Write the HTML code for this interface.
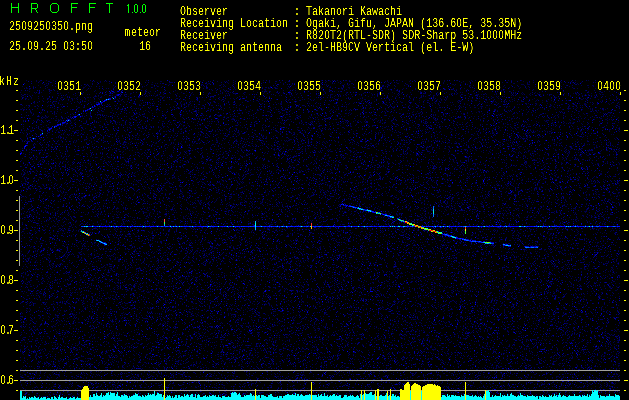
<!DOCTYPE html>
<html><head><meta charset="utf-8">
<style>
html,body{margin:0;padding:0;}
body{width:629px;height:400px;overflow:hidden;background:#000;position:relative;font-family:"Liberation Mono",monospace;}
.t{filter:url(#th);position:absolute;white-space:pre;font-size:13.5px;line-height:12px;color:#ff0;transform-origin:0 0;transform:scaleX(0.741);}
.h{position:absolute;top:1px;font-family:"Liberation Sans",sans-serif;font-size:14px;line-height:14px;color:#0f0;transform-origin:0 0;transform:scaleX(0.95);}
.v{position:absolute;top:4px;font-family:"Liberation Sans",sans-serif;font-size:11.5px;line-height:11px;color:#0f0;transform-origin:0 0;transform:scaleX(0.78);}
.z{line-height:0;font-family:"Liberation Sans",sans-serif;font-size:12.6px;padding-left:0.55px;letter-spacing:0.55px;}
#spec{position:absolute;left:20px;top:80px;width:600px;height:320px;background:#000010;}
canvas{position:absolute;left:0;top:0;}
svg{position:absolute;left:0;top:0;}
</style></head><body>
<svg width="0" height="0" style="position:absolute"><filter id="th" x="0" y="0" width="100%" height="100%"><feComponentTransfer><feFuncA type="linear" slope="2.5" intercept="-0.8"/></feComponentTransfer></filter></svg>
<div id="spec"><canvas id="cv" width="600" height="320"></canvas></div>

<svg width="629" height="400" viewBox="0 0 629 400" shape-rendering="crispEdges"><rect x="56" y="80" width="24" height="11" fill="#000"/><rect x="116" y="80" width="24" height="11" fill="#000"/><rect x="176" y="80" width="24" height="11" fill="#000"/><rect x="236" y="80" width="24" height="11" fill="#000"/><rect x="296" y="80" width="24" height="11" fill="#000"/><rect x="356" y="80" width="24" height="11" fill="#000"/><rect x="416" y="80" width="24" height="11" fill="#000"/><rect x="476" y="80" width="24" height="11" fill="#000"/><rect x="536" y="80" width="24" height="11" fill="#000"/><rect x="596" y="80" width="24" height="11" fill="#000"/><rect x="80" y="92" width="1" height="3" fill="#ff0"/><rect x="140" y="92" width="1" height="3" fill="#ff0"/><rect x="200" y="92" width="1" height="3" fill="#ff0"/><rect x="260" y="92" width="1" height="3" fill="#ff0"/><rect x="320" y="92" width="1" height="3" fill="#ff0"/><rect x="380" y="92" width="1" height="3" fill="#ff0"/><rect x="440" y="92" width="1" height="3" fill="#ff0"/><rect x="500" y="92" width="1" height="3" fill="#ff0"/><rect x="560" y="92" width="1" height="3" fill="#ff0"/><rect x="620" y="92" width="1" height="3" fill="#ff0"/><rect x="16" y="90" width="2" height="1" fill="#ff0"/><rect x="624" y="90" width="2" height="1" fill="#ff0"/><rect x="16" y="100" width="2" height="1" fill="#ff0"/><rect x="624" y="100" width="2" height="1" fill="#ff0"/><rect x="16" y="110" width="2" height="1" fill="#ff0"/><rect x="624" y="110" width="2" height="1" fill="#ff0"/><rect x="16" y="120" width="2" height="1" fill="#ff0"/><rect x="624" y="120" width="2" height="1" fill="#ff0"/><rect x="14" y="130" width="4" height="1" fill="#ff0"/><rect x="624" y="130" width="4" height="1" fill="#ff0"/><rect x="16" y="140" width="2" height="1" fill="#ff0"/><rect x="624" y="140" width="2" height="1" fill="#ff0"/><rect x="16" y="150" width="2" height="1" fill="#ff0"/><rect x="624" y="150" width="2" height="1" fill="#ff0"/><rect x="16" y="160" width="2" height="1" fill="#ff0"/><rect x="624" y="160" width="2" height="1" fill="#ff0"/><rect x="16" y="170" width="2" height="1" fill="#ff0"/><rect x="624" y="170" width="2" height="1" fill="#ff0"/><rect x="14" y="180" width="4" height="1" fill="#ff0"/><rect x="624" y="180" width="4" height="1" fill="#ff0"/><rect x="16" y="190" width="2" height="1" fill="#ff0"/><rect x="624" y="190" width="2" height="1" fill="#ff0"/><rect x="16" y="200" width="2" height="1" fill="#ff0"/><rect x="624" y="200" width="2" height="1" fill="#ff0"/><rect x="16" y="210" width="2" height="1" fill="#ff0"/><rect x="624" y="210" width="2" height="1" fill="#ff0"/><rect x="16" y="220" width="2" height="1" fill="#ff0"/><rect x="624" y="220" width="2" height="1" fill="#ff0"/><rect x="14" y="230" width="4" height="1" fill="#ff0"/><rect x="624" y="230" width="4" height="1" fill="#ff0"/><rect x="16" y="240" width="2" height="1" fill="#ff0"/><rect x="624" y="240" width="2" height="1" fill="#ff0"/><rect x="16" y="250" width="2" height="1" fill="#ff0"/><rect x="624" y="250" width="2" height="1" fill="#ff0"/><rect x="16" y="260" width="2" height="1" fill="#ff0"/><rect x="624" y="260" width="2" height="1" fill="#ff0"/><rect x="16" y="270" width="2" height="1" fill="#ff0"/><rect x="624" y="270" width="2" height="1" fill="#ff0"/><rect x="14" y="280" width="4" height="1" fill="#ff0"/><rect x="624" y="280" width="4" height="1" fill="#ff0"/><rect x="16" y="290" width="2" height="1" fill="#ff0"/><rect x="624" y="290" width="2" height="1" fill="#ff0"/><rect x="16" y="300" width="2" height="1" fill="#ff0"/><rect x="624" y="300" width="2" height="1" fill="#ff0"/><rect x="16" y="310" width="2" height="1" fill="#ff0"/><rect x="624" y="310" width="2" height="1" fill="#ff0"/><rect x="16" y="320" width="2" height="1" fill="#ff0"/><rect x="624" y="320" width="2" height="1" fill="#ff0"/><rect x="14" y="330" width="4" height="1" fill="#ff0"/><rect x="624" y="330" width="4" height="1" fill="#ff0"/><rect x="16" y="340" width="2" height="1" fill="#ff0"/><rect x="624" y="340" width="2" height="1" fill="#ff0"/><rect x="16" y="350" width="2" height="1" fill="#ff0"/><rect x="624" y="350" width="2" height="1" fill="#ff0"/><rect x="16" y="360" width="2" height="1" fill="#ff0"/><rect x="624" y="360" width="2" height="1" fill="#ff0"/><rect x="16" y="370" width="2" height="1" fill="#ff0"/><rect x="624" y="370" width="2" height="1" fill="#ff0"/><rect x="14" y="380" width="4" height="1" fill="#ff0"/><rect x="624" y="380" width="4" height="1" fill="#ff0"/><rect x="16" y="390" width="2" height="1" fill="#ff0"/><rect x="624" y="390" width="2" height="1" fill="#ff0"/><rect x="11" y="3" width="1" height="10" fill="#00ff00"/><rect x="18" y="3" width="1" height="10" fill="#00ff00"/><rect x="11" y="7" width="8" height="1" fill="#00ff00"/><rect x="31" y="3" width="1" height="10" fill="#00ff00"/><rect x="31" y="3" width="6" height="1" fill="#00ff00"/><rect x="37" y="4" width="1" height="4" fill="#00ff00"/><rect x="31" y="8" width="6" height="1" fill="#00ff00"/><rect x="35" y="9" width="1" height="1" fill="#00ff00"/><rect x="36" y="10" width="1" height="2" fill="#00ff00"/><rect x="37" y="12" width="1" height="1" fill="#00ff00"/><rect x="52" y="3" width="5" height="1" fill="#00ff00"/><rect x="52" y="12" width="5" height="1" fill="#00ff00"/><rect x="50" y="5" width="1" height="6" fill="#00ff00"/><rect x="58" y="5" width="1" height="6" fill="#00ff00"/><rect x="51" y="4" width="1" height="1" fill="#00ff00"/><rect x="57" y="4" width="1" height="1" fill="#00ff00"/><rect x="51" y="11" width="1" height="1" fill="#00ff00"/><rect x="57" y="11" width="1" height="1" fill="#00ff00"/><rect x="71" y="3" width="1" height="10" fill="#00ff00"/><rect x="71" y="3" width="7" height="1" fill="#00ff00"/><rect x="71" y="7" width="6" height="1" fill="#00ff00"/><rect x="89" y="3" width="1" height="10" fill="#00ff00"/><rect x="89" y="3" width="7" height="1" fill="#00ff00"/><rect x="89" y="7" width="6" height="1" fill="#00ff00"/><rect x="106" y="3" width="7" height="1" fill="#00ff00"/><rect x="109" y="3" width="1" height="10" fill="#00ff00"/><rect x="128" y="4" width="1" height="9" fill="#00ff00"/><rect x="127" y="5" width="1" height="1" fill="#00ff00"/><rect x="132" y="12" width="1" height="1" fill="#00ff00"/><rect x="140" y="12" width="1" height="1" fill="#00ff00"/><rect x="135" y="4" width="2" height="1" fill="#00ff00"/><rect x="135" y="12" width="2" height="1" fill="#00ff00"/><rect x="134" y="5" width="1" height="7" fill="#00ff00"/><rect x="137" y="5" width="1" height="7" fill="#00ff00"/><rect x="143" y="4" width="2" height="1" fill="#00ff00"/><rect x="143" y="12" width="2" height="1" fill="#00ff00"/><rect x="142" y="5" width="1" height="7" fill="#00ff00"/><rect x="145" y="5" width="1" height="7" fill="#00ff00"/><rect x="125" y="29" width="4" height="1" fill="#ff0"/><rect x="125" y="30" width="1" height="6" fill="#ff0"/><rect x="127" y="30" width="1" height="6" fill="#ff0"/><rect x="129" y="30" width="1" height="6" fill="#ff0"/><rect x="20" y="370" width="600" height="1" fill="#a0a09c"/><rect x="20" y="380" width="600" height="1" fill="#a0a09c"/><rect x="20" y="390" width="600" height="1" fill="#a0a09c"/><rect x="19" y="196" width="1" height="70" fill="#a0a09c"/><rect x="81" y="226" width="1" height="1" fill="#0029ff"/><rect x="82" y="226" width="1" height="1" fill="#003fff"/><rect x="83" y="226" width="1" height="1" fill="#001bff"/><rect x="84" y="226" width="1" height="1" fill="#00d0ff"/><rect x="85" y="226" width="1" height="1" fill="#004aff"/><rect x="86" y="226" width="1" height="1" fill="#00f6cd"/><rect x="87" y="226" width="1" height="1" fill="#00ccff"/><rect x="88" y="226" width="1" height="1" fill="#0000e5"/><rect x="89" y="226" width="1" height="1" fill="#0000fa"/><rect x="90" y="226" width="1" height="1" fill="#001bff"/><rect x="91" y="226" width="1" height="1" fill="#0000e9"/><rect x="92" y="226" width="1" height="1" fill="#00f4e1"/><rect x="93" y="226" width="1" height="1" fill="#000fff"/><rect x="94" y="226" width="1" height="1" fill="#0000f0"/><rect x="95" y="226" width="1" height="1" fill="#0000d5"/><rect x="96" y="226" width="1" height="1" fill="#0000ec"/><rect x="97" y="226" width="1" height="1" fill="#0054ff"/><rect x="98" y="226" width="1" height="1" fill="#0000e5"/><rect x="99" y="226" width="1" height="1" fill="#00b2ff"/><rect x="100" y="226" width="1" height="1" fill="#0009ff"/><rect x="101" y="226" width="1" height="1" fill="#0000db"/><rect x="102" y="226" width="1" height="1" fill="#000dff"/><rect x="103" y="226" width="1" height="1" fill="#0000f8"/><rect x="104" y="226" width="1" height="1" fill="#0000f8"/><rect x="105" y="226" width="1" height="1" fill="#0000ef"/><rect x="105" y="225" width="1" height="1" fill="#0000c0"/><rect x="106" y="226" width="1" height="1" fill="#0000f6"/><rect x="107" y="226" width="1" height="1" fill="#0000f2"/><rect x="108" y="226" width="1" height="1" fill="#0000d7"/><rect x="109" y="226" width="1" height="1" fill="#003eff"/><rect x="110" y="226" width="1" height="1" fill="#0000fc"/><rect x="111" y="226" width="1" height="1" fill="#00f2ea"/><rect x="112" y="226" width="1" height="1" fill="#0000f9"/><rect x="113" y="226" width="1" height="1" fill="#0027ff"/><rect x="114" y="226" width="1" height="1" fill="#0014ff"/><rect x="114" y="227" width="1" height="1" fill="#0000c0"/><rect x="115" y="226" width="1" height="1" fill="#0000fc"/><rect x="116" y="226" width="1" height="1" fill="#00b7ff"/><rect x="117" y="226" width="1" height="1" fill="#0031ff"/><rect x="118" y="226" width="1" height="1" fill="#0000f2"/><rect x="119" y="226" width="1" height="1" fill="#0000de"/><rect x="120" y="226" width="1" height="1" fill="#003dff"/><rect x="121" y="226" width="1" height="1" fill="#0000f7"/><rect x="122" y="226" width="1" height="1" fill="#0000fe"/><rect x="123" y="226" width="1" height="1" fill="#0007ff"/><rect x="124" y="226" width="1" height="1" fill="#002dff"/><rect x="125" y="226" width="1" height="1" fill="#000bff"/><rect x="126" y="226" width="1" height="1" fill="#0000c6"/><rect x="127" y="226" width="1" height="1" fill="#00b5ff"/><rect x="128" y="226" width="1" height="1" fill="#0000d7"/><rect x="129" y="226" width="1" height="1" fill="#0000cc"/><rect x="130" y="226" width="1" height="1" fill="#003dff"/><rect x="131" y="226" width="1" height="1" fill="#0008ff"/><rect x="132" y="226" width="1" height="1" fill="#0000cb"/><rect x="132" y="225" width="1" height="1" fill="#0000c0"/><rect x="133" y="226" width="1" height="1" fill="#0000d1"/><rect x="134" y="226" width="1" height="1" fill="#003eff"/><rect x="135" y="226" width="1" height="1" fill="#003fff"/><rect x="136" y="226" width="1" height="1" fill="#0000fd"/><rect x="137" y="226" width="1" height="1" fill="#0054ff"/><rect x="138" y="226" width="1" height="1" fill="#0006ff"/><rect x="139" y="226" width="1" height="1" fill="#003cff"/><rect x="140" y="226" width="1" height="1" fill="#001eff"/><rect x="141" y="226" width="1" height="1" fill="#000bff"/><rect x="142" y="226" width="1" height="1" fill="#0000f1"/><rect x="142" y="227" width="1" height="1" fill="#0000c0"/><rect x="143" y="226" width="1" height="1" fill="#00f3e9"/><rect x="144" y="226" width="1" height="1" fill="#0014ff"/><rect x="145" y="226" width="1" height="1" fill="#0043ff"/><rect x="146" y="226" width="1" height="1" fill="#0011ff"/><rect x="147" y="226" width="1" height="1" fill="#000cff"/><rect x="148" y="226" width="1" height="1" fill="#0017ff"/><rect x="149" y="226" width="1" height="1" fill="#0003ff"/><rect x="150" y="226" width="1" height="1" fill="#0000e1"/><rect x="151" y="226" width="1" height="1" fill="#001aff"/><rect x="152" y="226" width="1" height="1" fill="#0006ff"/><rect x="153" y="226" width="1" height="1" fill="#0014ff"/><rect x="154" y="226" width="1" height="1" fill="#0000d6"/><rect x="155" y="226" width="1" height="1" fill="#0000fd"/><rect x="156" y="226" width="1" height="1" fill="#0000ef"/><rect x="157" y="226" width="1" height="1" fill="#00caff"/><rect x="158" y="226" width="1" height="1" fill="#0000f0"/><rect x="159" y="226" width="1" height="1" fill="#0000fa"/><rect x="160" y="226" width="1" height="1" fill="#0005ff"/><rect x="161" y="226" width="1" height="1" fill="#0058ff"/><rect x="162" y="226" width="1" height="1" fill="#0049ff"/><rect x="163" y="226" width="1" height="1" fill="#0000fc"/><rect x="164" y="226" width="1" height="1" fill="#0000ef"/><rect x="165" y="226" width="1" height="1" fill="#002cff"/><rect x="166" y="226" width="1" height="1" fill="#003cff"/><rect x="167" y="226" width="1" height="1" fill="#0034ff"/><rect x="168" y="226" width="1" height="1" fill="#0000f9"/><rect x="169" y="226" width="1" height="1" fill="#0000f3"/><rect x="170" y="226" width="1" height="1" fill="#00f3e9"/><rect x="171" y="226" width="1" height="1" fill="#0008ff"/><rect x="171" y="227" width="1" height="1" fill="#0000c0"/><rect x="172" y="226" width="1" height="1" fill="#0002ff"/><rect x="173" y="226" width="1" height="1" fill="#00c9ff"/><rect x="174" y="226" width="1" height="1" fill="#000cff"/><rect x="175" y="226" width="1" height="1" fill="#0039ff"/><rect x="176" y="226" width="1" height="1" fill="#00bcff"/><rect x="177" y="226" width="1" height="1" fill="#0000f0"/><rect x="178" y="226" width="1" height="1" fill="#0001ff"/><rect x="179" y="226" width="1" height="1" fill="#00f4dc"/><rect x="180" y="226" width="1" height="1" fill="#0010ff"/><rect x="181" y="226" width="1" height="1" fill="#004eff"/><rect x="182" y="226" width="1" height="1" fill="#0025ff"/><rect x="183" y="226" width="1" height="1" fill="#0000f9"/><rect x="184" y="226" width="1" height="1" fill="#0025ff"/><rect x="185" y="226" width="1" height="1" fill="#0018ff"/><rect x="186" y="226" width="1" height="1" fill="#0010ff"/><rect x="187" y="226" width="1" height="1" fill="#0014ff"/><rect x="188" y="226" width="1" height="1" fill="#000eff"/><rect x="189" y="226" width="1" height="1" fill="#0053ff"/><rect x="190" y="226" width="1" height="1" fill="#0042ff"/><rect x="191" y="226" width="1" height="1" fill="#0000fa"/><rect x="192" y="226" width="1" height="1" fill="#00ceff"/><rect x="193" y="226" width="1" height="1" fill="#0000f9"/><rect x="194" y="226" width="1" height="1" fill="#0000f8"/><rect x="195" y="226" width="1" height="1" fill="#0028ff"/><rect x="196" y="226" width="1" height="1" fill="#0000bf"/><rect x="197" y="226" width="1" height="1" fill="#0000bb"/><rect x="198" y="226" width="1" height="1" fill="#0000f8"/><rect x="199" y="226" width="1" height="1" fill="#000cff"/><rect x="200" y="226" width="1" height="1" fill="#0004ff"/><rect x="201" y="226" width="1" height="1" fill="#0000fb"/><rect x="202" y="226" width="1" height="1" fill="#0000f7"/><rect x="203" y="226" width="1" height="1" fill="#003dff"/><rect x="204" y="226" width="1" height="1" fill="#0009ff"/><rect x="205" y="226" width="1" height="1" fill="#002dff"/><rect x="206" y="226" width="1" height="1" fill="#001eff"/><rect x="207" y="226" width="1" height="1" fill="#0010ff"/><rect x="208" y="226" width="1" height="1" fill="#00f0ff"/><rect x="209" y="226" width="1" height="1" fill="#0052ff"/><rect x="210" y="226" width="1" height="1" fill="#0043ff"/><rect x="211" y="226" width="1" height="1" fill="#000dff"/><rect x="212" y="226" width="1" height="1" fill="#0034ff"/><rect x="213" y="226" width="1" height="1" fill="#0009ff"/><rect x="214" y="226" width="1" height="1" fill="#0034ff"/><rect x="215" y="226" width="1" height="1" fill="#0000ff"/><rect x="216" y="226" width="1" height="1" fill="#000dff"/><rect x="217" y="226" width="1" height="1" fill="#0000fa"/><rect x="218" y="226" width="1" height="1" fill="#00f0ff"/><rect x="219" y="226" width="1" height="1" fill="#000099"/><rect x="220" y="226" width="1" height="1" fill="#0000ce"/><rect x="221" y="226" width="1" height="1" fill="#0000fc"/><rect x="222" y="226" width="1" height="1" fill="#000bff"/><rect x="223" y="226" width="1" height="1" fill="#0000e1"/><rect x="224" y="226" width="1" height="1" fill="#002eff"/><rect x="225" y="226" width="1" height="1" fill="#0000f5"/><rect x="226" y="226" width="1" height="1" fill="#001fff"/><rect x="227" y="226" width="1" height="1" fill="#00c9ff"/><rect x="228" y="226" width="1" height="1" fill="#0000ca"/><rect x="229" y="226" width="1" height="1" fill="#0004ff"/><rect x="230" y="226" width="1" height="1" fill="#0046ff"/><rect x="231" y="226" width="1" height="1" fill="#0004ff"/><rect x="232" y="226" width="1" height="1" fill="#0000ef"/><rect x="233" y="226" width="1" height="1" fill="#00f1fb"/><rect x="234" y="226" width="1" height="1" fill="#001fff"/><rect x="235" y="226" width="1" height="1" fill="#0005ff"/><rect x="236" y="226" width="1" height="1" fill="#0003ff"/><rect x="237" y="226" width="1" height="1" fill="#0030ff"/><rect x="238" y="226" width="1" height="1" fill="#0001ff"/><rect x="239" y="226" width="1" height="1" fill="#000cff"/><rect x="240" y="226" width="1" height="1" fill="#0000d5"/><rect x="241" y="226" width="1" height="1" fill="#0043ff"/><rect x="242" y="226" width="1" height="1" fill="#0011ff"/><rect x="243" y="226" width="1" height="1" fill="#0032ff"/><rect x="244" y="226" width="1" height="1" fill="#0022ff"/><rect x="245" y="226" width="1" height="1" fill="#000dff"/><rect x="246" y="226" width="1" height="1" fill="#0016ff"/><rect x="247" y="226" width="1" height="1" fill="#000eff"/><rect x="248" y="226" width="1" height="1" fill="#001dff"/><rect x="249" y="226" width="1" height="1" fill="#001cff"/><rect x="250" y="226" width="1" height="1" fill="#0045ff"/><rect x="251" y="226" width="1" height="1" fill="#0020ff"/><rect x="252" y="226" width="1" height="1" fill="#0019ff"/><rect x="253" y="226" width="1" height="1" fill="#002cff"/><rect x="254" y="226" width="1" height="1" fill="#000cff"/><rect x="255" y="226" width="1" height="1" fill="#0038ff"/><rect x="256" y="226" width="1" height="1" fill="#0014ff"/><rect x="257" y="226" width="1" height="1" fill="#0019ff"/><rect x="258" y="226" width="1" height="1" fill="#0003ff"/><rect x="259" y="226" width="1" height="1" fill="#001dff"/><rect x="260" y="226" width="1" height="1" fill="#0029ff"/><rect x="261" y="226" width="1" height="1" fill="#00cbff"/><rect x="262" y="226" width="1" height="1" fill="#0015ff"/><rect x="263" y="226" width="1" height="1" fill="#0003ff"/><rect x="264" y="226" width="1" height="1" fill="#001cff"/><rect x="265" y="226" width="1" height="1" fill="#0026ff"/><rect x="266" y="226" width="1" height="1" fill="#0000ec"/><rect x="267" y="226" width="1" height="1" fill="#0000f8"/><rect x="268" y="226" width="1" height="1" fill="#001eff"/><rect x="269" y="226" width="1" height="1" fill="#002eff"/><rect x="269" y="225" width="1" height="1" fill="#0000c0"/><rect x="270" y="226" width="1" height="1" fill="#0000f4"/><rect x="271" y="226" width="1" height="1" fill="#004fff"/><rect x="272" y="226" width="1" height="1" fill="#0010ff"/><rect x="273" y="226" width="1" height="1" fill="#0019ff"/><rect x="274" y="226" width="1" height="1" fill="#0000f5"/><rect x="275" y="226" width="1" height="1" fill="#0022ff"/><rect x="276" y="226" width="1" height="1" fill="#0028ff"/><rect x="277" y="226" width="1" height="1" fill="#00aeff"/><rect x="278" y="226" width="1" height="1" fill="#0000d1"/><rect x="279" y="226" width="1" height="1" fill="#0028ff"/><rect x="279" y="227" width="1" height="1" fill="#0000c0"/><rect x="280" y="226" width="1" height="1" fill="#0000cf"/><rect x="281" y="226" width="1" height="1" fill="#004eff"/><rect x="282" y="226" width="1" height="1" fill="#00bfff"/><rect x="283" y="226" width="1" height="1" fill="#001fff"/><rect x="284" y="226" width="1" height="1" fill="#0040ff"/><rect x="285" y="226" width="1" height="1" fill="#0000cb"/><rect x="286" y="226" width="1" height="1" fill="#00f1f8"/><rect x="287" y="226" width="1" height="1" fill="#0014ff"/><rect x="287" y="227" width="1" height="1" fill="#0000c0"/><rect x="288" y="226" width="1" height="1" fill="#001bff"/><rect x="289" y="226" width="1" height="1" fill="#0000fd"/><rect x="290" y="226" width="1" height="1" fill="#0034ff"/><rect x="291" y="226" width="1" height="1" fill="#0026ff"/><rect x="292" y="226" width="1" height="1" fill="#0023ff"/><rect x="293" y="226" width="1" height="1" fill="#0000f2"/><rect x="294" y="226" width="1" height="1" fill="#0000f2"/><rect x="295" y="226" width="1" height="1" fill="#002cff"/><rect x="296" y="226" width="1" height="1" fill="#0000fb"/><rect x="297" y="226" width="1" height="1" fill="#002eff"/><rect x="298" y="226" width="1" height="1" fill="#000bff"/><rect x="298" y="225" width="1" height="1" fill="#0000c0"/><rect x="299" y="226" width="1" height="1" fill="#0022ff"/><rect x="300" y="226" width="1" height="1" fill="#0038ff"/><rect x="301" y="226" width="1" height="1" fill="#00f5d8"/><rect x="302" y="226" width="1" height="1" fill="#0045ff"/><rect x="303" y="226" width="1" height="1" fill="#0000d5"/><rect x="304" y="226" width="1" height="1" fill="#0035ff"/><rect x="305" y="226" width="1" height="1" fill="#0000fb"/><rect x="306" y="226" width="1" height="1" fill="#0029ff"/><rect x="307" y="226" width="1" height="1" fill="#0061ff"/><rect x="308" y="226" width="1" height="1" fill="#0000f6"/><rect x="309" y="226" width="1" height="1" fill="#0000bc"/><rect x="310" y="226" width="1" height="1" fill="#00f1f8"/><rect x="311" y="226" width="1" height="1" fill="#001eff"/><rect x="312" y="226" width="1" height="1" fill="#0000fc"/><rect x="313" y="226" width="1" height="1" fill="#002cff"/><rect x="314" y="226" width="1" height="1" fill="#0011ff"/><rect x="314" y="227" width="1" height="1" fill="#0000c0"/><rect x="315" y="226" width="1" height="1" fill="#002dff"/><rect x="316" y="226" width="1" height="1" fill="#0020ff"/><rect x="317" y="226" width="1" height="1" fill="#0005ff"/><rect x="318" y="226" width="1" height="1" fill="#003dff"/><rect x="319" y="226" width="1" height="1" fill="#0042ff"/><rect x="320" y="226" width="1" height="1" fill="#0050ff"/><rect x="321" y="226" width="1" height="1" fill="#0009ff"/><rect x="322" y="226" width="1" height="1" fill="#0000e6"/><rect x="323" y="226" width="1" height="1" fill="#0000e1"/><rect x="324" y="226" width="1" height="1" fill="#0015ff"/><rect x="325" y="226" width="1" height="1" fill="#001cff"/><rect x="326" y="226" width="1" height="1" fill="#003bff"/><rect x="327" y="226" width="1" height="1" fill="#0015ff"/><rect x="328" y="226" width="1" height="1" fill="#005fff"/><rect x="329" y="226" width="1" height="1" fill="#0021ff"/><rect x="330" y="226" width="1" height="1" fill="#0004ff"/><rect x="331" y="226" width="1" height="1" fill="#0000f1"/><rect x="332" y="226" width="1" height="1" fill="#0000f8"/><rect x="333" y="226" width="1" height="1" fill="#004cff"/><rect x="333" y="225" width="1" height="1" fill="#0000c0"/><rect x="334" y="226" width="1" height="1" fill="#0000e3"/><rect x="335" y="226" width="1" height="1" fill="#0000ae"/><rect x="336" y="226" width="1" height="1" fill="#0000e8"/><rect x="337" y="226" width="1" height="1" fill="#0000f2"/><rect x="338" y="226" width="1" height="1" fill="#0000d7"/><rect x="338" y="227" width="1" height="1" fill="#0000c0"/><rect x="339" y="226" width="1" height="1" fill="#0033ff"/><rect x="340" y="226" width="1" height="1" fill="#0002ff"/><rect x="341" y="226" width="1" height="1" fill="#0000f6"/><rect x="342" y="226" width="1" height="1" fill="#0000e9"/><rect x="343" y="226" width="1" height="1" fill="#0009ff"/><rect x="344" y="226" width="1" height="1" fill="#0070ff"/><rect x="345" y="226" width="1" height="1" fill="#0049ff"/><rect x="346" y="226" width="1" height="1" fill="#0000dc"/><rect x="347" y="226" width="1" height="1" fill="#0000ed"/><rect x="348" y="226" width="1" height="1" fill="#0000f9"/><rect x="348" y="225" width="1" height="1" fill="#0000c0"/><rect x="349" y="226" width="1" height="1" fill="#0024ff"/><rect x="350" y="226" width="1" height="1" fill="#0000e6"/><rect x="351" y="226" width="1" height="1" fill="#00baff"/><rect x="352" y="226" width="1" height="1" fill="#0000e4"/><rect x="353" y="226" width="1" height="1" fill="#0000e5"/><rect x="354" y="226" width="1" height="1" fill="#0017ff"/><rect x="355" y="226" width="1" height="1" fill="#0000f1"/><rect x="356" y="226" width="1" height="1" fill="#0008ff"/><rect x="357" y="226" width="1" height="1" fill="#0000ee"/><rect x="358" y="226" width="1" height="1" fill="#00f1f6"/><rect x="359" y="226" width="1" height="1" fill="#000bff"/><rect x="360" y="226" width="1" height="1" fill="#0000a6"/><rect x="361" y="226" width="1" height="1" fill="#0002ff"/><rect x="362" y="226" width="1" height="1" fill="#001bff"/><rect x="363" y="226" width="1" height="1" fill="#0040ff"/><rect x="364" y="226" width="1" height="1" fill="#00f2ec"/><rect x="365" y="226" width="1" height="1" fill="#0006ff"/><rect x="366" y="226" width="1" height="1" fill="#0037ff"/><rect x="367" y="226" width="1" height="1" fill="#0048ff"/><rect x="368" y="226" width="1" height="1" fill="#0000eb"/><rect x="369" y="226" width="1" height="1" fill="#0018ff"/><rect x="370" y="226" width="1" height="1" fill="#002dff"/><rect x="371" y="226" width="1" height="1" fill="#001bff"/><rect x="372" y="226" width="1" height="1" fill="#0006ff"/><rect x="373" y="226" width="1" height="1" fill="#0000ca"/><rect x="374" y="226" width="1" height="1" fill="#0018ff"/><rect x="375" y="226" width="1" height="1" fill="#000eff"/><rect x="376" y="226" width="1" height="1" fill="#0000f5"/><rect x="377" y="226" width="1" height="1" fill="#0000ac"/><rect x="378" y="226" width="1" height="1" fill="#0000f7"/><rect x="379" y="226" width="1" height="1" fill="#0036ff"/><rect x="380" y="226" width="1" height="1" fill="#0043ff"/><rect x="381" y="226" width="1" height="1" fill="#0000f2"/><rect x="382" y="226" width="1" height="1" fill="#0018ff"/><rect x="383" y="226" width="1" height="1" fill="#003dff"/><rect x="384" y="226" width="1" height="1" fill="#001bff"/><rect x="385" y="226" width="1" height="1" fill="#0007ff"/><rect x="386" y="226" width="1" height="1" fill="#001bff"/><rect x="387" y="226" width="1" height="1" fill="#0000ee"/><rect x="388" y="226" width="1" height="1" fill="#0000c9"/><rect x="389" y="226" width="1" height="1" fill="#0000eb"/><rect x="389" y="225" width="1" height="1" fill="#0000c0"/><rect x="390" y="226" width="1" height="1" fill="#00dcff"/><rect x="391" y="226" width="1" height="1" fill="#0000c6"/><rect x="392" y="226" width="1" height="1" fill="#00f3e3"/><rect x="393" y="226" width="1" height="1" fill="#0000fd"/><rect x="394" y="226" width="1" height="1" fill="#00f5d3"/><rect x="395" y="226" width="1" height="1" fill="#0000cb"/><rect x="396" y="226" width="1" height="1" fill="#0000ec"/><rect x="397" y="226" width="1" height="1" fill="#001aff"/><rect x="398" y="226" width="1" height="1" fill="#00e1ff"/><rect x="399" y="226" width="1" height="1" fill="#00f5d2"/><rect x="400" y="226" width="1" height="1" fill="#0018ff"/><rect x="401" y="226" width="1" height="1" fill="#0009ff"/><rect x="402" y="226" width="1" height="1" fill="#000bff"/><rect x="403" y="226" width="1" height="1" fill="#00f6d0"/><rect x="404" y="226" width="1" height="1" fill="#00bbff"/><rect x="405" y="226" width="1" height="1" fill="#0043ff"/><rect x="406" y="226" width="1" height="1" fill="#004eff"/><rect x="407" y="226" width="1" height="1" fill="#0015ff"/><rect x="407" y="225" width="1" height="1" fill="#0000c0"/><rect x="408" y="226" width="1" height="1" fill="#002eff"/><rect x="409" y="226" width="1" height="1" fill="#0000ba"/><rect x="410" y="226" width="1" height="1" fill="#003bff"/><rect x="411" y="226" width="1" height="1" fill="#0029ff"/><rect x="412" y="226" width="1" height="1" fill="#0051ff"/><rect x="413" y="226" width="1" height="1" fill="#0000d6"/><rect x="414" y="226" width="1" height="1" fill="#0000ff"/><rect x="415" y="226" width="1" height="1" fill="#000dff"/><rect x="416" y="226" width="1" height="1" fill="#000eff"/><rect x="417" y="226" width="1" height="1" fill="#0000f6"/><rect x="418" y="226" width="1" height="1" fill="#0000e5"/><rect x="419" y="226" width="1" height="1" fill="#0000fc"/><rect x="420" y="226" width="1" height="1" fill="#00dcff"/><rect x="421" y="226" width="1" height="1" fill="#0034ff"/><rect x="422" y="226" width="1" height="1" fill="#0004ff"/><rect x="422" y="225" width="1" height="1" fill="#0000c0"/><rect x="423" y="226" width="1" height="1" fill="#0000f1"/><rect x="424" y="226" width="1" height="1" fill="#0050ff"/><rect x="425" y="226" width="1" height="1" fill="#0000a8"/><rect x="426" y="226" width="1" height="1" fill="#0032ff"/><rect x="427" y="226" width="1" height="1" fill="#0000fb"/><rect x="428" y="226" width="1" height="1" fill="#0000f5"/><rect x="429" y="226" width="1" height="1" fill="#0020ff"/><rect x="430" y="226" width="1" height="1" fill="#0016ff"/><rect x="431" y="226" width="1" height="1" fill="#0000f4"/><rect x="432" y="226" width="1" height="1" fill="#005eff"/><rect x="433" y="226" width="1" height="1" fill="#0000f6"/><rect x="433" y="227" width="1" height="1" fill="#0000c0"/><rect x="434" y="226" width="1" height="1" fill="#003dff"/><rect x="435" y="226" width="1" height="1" fill="#00efff"/><rect x="435" y="227" width="1" height="1" fill="#0000c0"/><rect x="436" y="226" width="1" height="1" fill="#0000d9"/><rect x="437" y="226" width="1" height="1" fill="#0028ff"/><rect x="437" y="225" width="1" height="1" fill="#0000c0"/><rect x="438" y="226" width="1" height="1" fill="#0000d9"/><rect x="439" y="226" width="1" height="1" fill="#003cff"/><rect x="440" y="226" width="1" height="1" fill="#00aaff"/><rect x="440" y="227" width="1" height="1" fill="#0000c0"/><rect x="441" y="226" width="1" height="1" fill="#0001ff"/><rect x="442" y="226" width="1" height="1" fill="#0010ff"/><rect x="443" y="226" width="1" height="1" fill="#00f1f5"/><rect x="444" y="226" width="1" height="1" fill="#0008ff"/><rect x="445" y="226" width="1" height="1" fill="#0019ff"/><rect x="446" y="226" width="1" height="1" fill="#0000b9"/><rect x="447" y="226" width="1" height="1" fill="#00e8ff"/><rect x="448" y="226" width="1" height="1" fill="#002cff"/><rect x="449" y="226" width="1" height="1" fill="#0015ff"/><rect x="449" y="227" width="1" height="1" fill="#0000c0"/><rect x="450" y="226" width="1" height="1" fill="#0006ff"/><rect x="451" y="226" width="1" height="1" fill="#0000fa"/><rect x="452" y="226" width="1" height="1" fill="#000eff"/><rect x="453" y="226" width="1" height="1" fill="#0000f9"/><rect x="454" y="226" width="1" height="1" fill="#0007ff"/><rect x="455" y="226" width="1" height="1" fill="#0042ff"/><rect x="456" y="226" width="1" height="1" fill="#0000d6"/><rect x="457" y="226" width="1" height="1" fill="#0000c6"/><rect x="458" y="226" width="1" height="1" fill="#002bff"/><rect x="459" y="226" width="1" height="1" fill="#0000f8"/><rect x="460" y="226" width="1" height="1" fill="#0010ff"/><rect x="461" y="226" width="1" height="1" fill="#0039ff"/><rect x="462" y="226" width="1" height="1" fill="#0000ef"/><rect x="463" y="226" width="1" height="1" fill="#004eff"/><rect x="464" y="226" width="1" height="1" fill="#0060ff"/><rect x="465" y="226" width="1" height="1" fill="#00cfff"/><rect x="466" y="226" width="1" height="1" fill="#0057ff"/><rect x="467" y="226" width="1" height="1" fill="#0000fb"/><rect x="468" y="226" width="1" height="1" fill="#000bff"/><rect x="469" y="226" width="1" height="1" fill="#0000db"/><rect x="470" y="226" width="1" height="1" fill="#0028ff"/><rect x="471" y="226" width="1" height="1" fill="#0000d5"/><rect x="472" y="226" width="1" height="1" fill="#0000fb"/><rect x="473" y="226" width="1" height="1" fill="#0034ff"/><rect x="474" y="226" width="1" height="1" fill="#0000fd"/><rect x="475" y="226" width="1" height="1" fill="#0015ff"/><rect x="476" y="226" width="1" height="1" fill="#0000eb"/><rect x="477" y="226" width="1" height="1" fill="#000dff"/><rect x="478" y="226" width="1" height="1" fill="#00daff"/><rect x="479" y="226" width="1" height="1" fill="#001dff"/><rect x="480" y="226" width="1" height="1" fill="#0000df"/><rect x="481" y="226" width="1" height="1" fill="#0017ff"/><rect x="482" y="226" width="1" height="1" fill="#0000d8"/><rect x="483" y="226" width="1" height="1" fill="#005fff"/><rect x="484" y="226" width="1" height="1" fill="#00f3e7"/><rect x="485" y="226" width="1" height="1" fill="#0000e0"/><rect x="486" y="226" width="1" height="1" fill="#0004ff"/><rect x="487" y="226" width="1" height="1" fill="#0047ff"/><rect x="488" y="226" width="1" height="1" fill="#0000e2"/><rect x="489" y="226" width="1" height="1" fill="#0000c7"/><rect x="489" y="225" width="1" height="1" fill="#0000c0"/><rect x="490" y="226" width="1" height="1" fill="#0000ec"/><rect x="491" y="226" width="1" height="1" fill="#001eff"/><rect x="492" y="226" width="1" height="1" fill="#0000e5"/><rect x="493" y="226" width="1" height="1" fill="#003eff"/><rect x="494" y="226" width="1" height="1" fill="#0000fc"/><rect x="495" y="226" width="1" height="1" fill="#0006ff"/><rect x="496" y="226" width="1" height="1" fill="#000eff"/><rect x="497" y="226" width="1" height="1" fill="#0002ff"/><rect x="498" y="226" width="1" height="1" fill="#0029ff"/><rect x="499" y="226" width="1" height="1" fill="#000dff"/><rect x="500" y="226" width="1" height="1" fill="#005fff"/><rect x="500" y="225" width="1" height="1" fill="#0000c0"/><rect x="501" y="226" width="1" height="1" fill="#0000dc"/><rect x="502" y="226" width="1" height="1" fill="#0000e7"/><rect x="503" y="226" width="1" height="1" fill="#0000ec"/><rect x="504" y="226" width="1" height="1" fill="#0073ff"/><rect x="505" y="226" width="1" height="1" fill="#0000fc"/><rect x="505" y="225" width="1" height="1" fill="#0000c0"/><rect x="506" y="226" width="1" height="1" fill="#00f1f8"/><rect x="507" y="226" width="1" height="1" fill="#0000ee"/><rect x="508" y="226" width="1" height="1" fill="#0000f8"/><rect x="509" y="226" width="1" height="1" fill="#001eff"/><rect x="510" y="226" width="1" height="1" fill="#0000fe"/><rect x="511" y="226" width="1" height="1" fill="#0000fb"/><rect x="512" y="226" width="1" height="1" fill="#0001ff"/><rect x="513" y="226" width="1" height="1" fill="#0000ff"/><rect x="514" y="226" width="1" height="1" fill="#0000e3"/><rect x="515" y="226" width="1" height="1" fill="#0000e2"/><rect x="516" y="226" width="1" height="1" fill="#0007ff"/><rect x="517" y="226" width="1" height="1" fill="#0000f5"/><rect x="518" y="226" width="1" height="1" fill="#0000f6"/><rect x="519" y="226" width="1" height="1" fill="#00deff"/><rect x="520" y="226" width="1" height="1" fill="#00f2f2"/><rect x="521" y="226" width="1" height="1" fill="#0033ff"/><rect x="522" y="226" width="1" height="1" fill="#002eff"/><rect x="523" y="226" width="1" height="1" fill="#0000f0"/><rect x="524" y="226" width="1" height="1" fill="#00f2eb"/><rect x="525" y="226" width="1" height="1" fill="#0036ff"/><rect x="526" y="226" width="1" height="1" fill="#0000eb"/><rect x="527" y="226" width="1" height="1" fill="#003eff"/><rect x="528" y="226" width="1" height="1" fill="#0000fc"/><rect x="529" y="226" width="1" height="1" fill="#0000ee"/><rect x="530" y="226" width="1" height="1" fill="#0000f4"/><rect x="531" y="226" width="1" height="1" fill="#000bff"/><rect x="532" y="226" width="1" height="1" fill="#0000f0"/><rect x="533" y="226" width="1" height="1" fill="#0000f4"/><rect x="534" y="226" width="1" height="1" fill="#004eff"/><rect x="535" y="226" width="1" height="1" fill="#000cff"/><rect x="536" y="226" width="1" height="1" fill="#002bff"/><rect x="536" y="225" width="1" height="1" fill="#0000c0"/><rect x="537" y="226" width="1" height="1" fill="#0019ff"/><rect x="538" y="226" width="1" height="1" fill="#00ecff"/><rect x="539" y="226" width="1" height="1" fill="#0000de"/><rect x="540" y="226" width="1" height="1" fill="#00b5ff"/><rect x="541" y="226" width="1" height="1" fill="#006aff"/><rect x="542" y="226" width="1" height="1" fill="#0047ff"/><rect x="543" y="226" width="1" height="1" fill="#000eff"/><rect x="543" y="225" width="1" height="1" fill="#0000c0"/><rect x="544" y="226" width="1" height="1" fill="#0052ff"/><rect x="545" y="226" width="1" height="1" fill="#0026ff"/><rect x="546" y="226" width="1" height="1" fill="#0017ff"/><rect x="547" y="226" width="1" height="1" fill="#0000ec"/><rect x="547" y="227" width="1" height="1" fill="#0000c0"/><rect x="548" y="226" width="1" height="1" fill="#0000c0"/><rect x="549" y="226" width="1" height="1" fill="#00efff"/><rect x="550" y="226" width="1" height="1" fill="#0000df"/><rect x="551" y="226" width="1" height="1" fill="#0000fb"/><rect x="552" y="226" width="1" height="1" fill="#004aff"/><rect x="553" y="226" width="1" height="1" fill="#0034ff"/><rect x="554" y="226" width="1" height="1" fill="#0049ff"/><rect x="555" y="226" width="1" height="1" fill="#0018ff"/><rect x="556" y="226" width="1" height="1" fill="#0000e7"/><rect x="556" y="225" width="1" height="1" fill="#0000c0"/><rect x="557" y="226" width="1" height="1" fill="#0033ff"/><rect x="558" y="226" width="1" height="1" fill="#0018ff"/><rect x="559" y="226" width="1" height="1" fill="#0005ff"/><rect x="560" y="226" width="1" height="1" fill="#0006ff"/><rect x="561" y="226" width="1" height="1" fill="#0031ff"/><rect x="562" y="226" width="1" height="1" fill="#0000f0"/><rect x="563" y="226" width="1" height="1" fill="#0000eb"/><rect x="564" y="226" width="1" height="1" fill="#0000ec"/><rect x="564" y="225" width="1" height="1" fill="#0000c0"/><rect x="565" y="226" width="1" height="1" fill="#000dff"/><rect x="566" y="226" width="1" height="1" fill="#00e4ff"/><rect x="567" y="226" width="1" height="1" fill="#0000ff"/><rect x="568" y="226" width="1" height="1" fill="#00b6ff"/><rect x="569" y="226" width="1" height="1" fill="#0022ff"/><rect x="570" y="226" width="1" height="1" fill="#00b3ff"/><rect x="571" y="226" width="1" height="1" fill="#0000e9"/><rect x="572" y="226" width="1" height="1" fill="#0000f8"/><rect x="573" y="226" width="1" height="1" fill="#0000e5"/><rect x="574" y="226" width="1" height="1" fill="#0031ff"/><rect x="575" y="226" width="1" height="1" fill="#00c5ff"/><rect x="575" y="225" width="1" height="1" fill="#0000c0"/><rect x="576" y="226" width="1" height="1" fill="#0003ff"/><rect x="577" y="226" width="1" height="1" fill="#001dff"/><rect x="578" y="226" width="1" height="1" fill="#0019ff"/><rect x="579" y="226" width="1" height="1" fill="#0000f7"/><rect x="580" y="226" width="1" height="1" fill="#0021ff"/><rect x="581" y="226" width="1" height="1" fill="#0000fa"/><rect x="582" y="226" width="1" height="1" fill="#0000fb"/><rect x="583" y="226" width="1" height="1" fill="#0032ff"/><rect x="584" y="226" width="1" height="1" fill="#0000b1"/><rect x="585" y="226" width="1" height="1" fill="#00c2ff"/><rect x="586" y="226" width="1" height="1" fill="#0000d8"/><rect x="587" y="226" width="1" height="1" fill="#0016ff"/><rect x="588" y="226" width="1" height="1" fill="#004fff"/><rect x="589" y="226" width="1" height="1" fill="#00f5d5"/><rect x="590" y="226" width="1" height="1" fill="#0000ec"/><rect x="591" y="226" width="1" height="1" fill="#001eff"/><rect x="592" y="226" width="1" height="1" fill="#00f5d5"/><rect x="593" y="226" width="1" height="1" fill="#0000df"/><rect x="594" y="226" width="1" height="1" fill="#0000de"/><rect x="595" y="226" width="1" height="1" fill="#0000f6"/><rect x="596" y="226" width="1" height="1" fill="#0058ff"/><rect x="597" y="226" width="1" height="1" fill="#0057ff"/><rect x="598" y="226" width="1" height="1" fill="#004bff"/><rect x="599" y="226" width="1" height="1" fill="#0000fc"/><rect x="599" y="225" width="1" height="1" fill="#0000c0"/><rect x="600" y="226" width="1" height="1" fill="#0012ff"/><rect x="601" y="226" width="1" height="1" fill="#0004ff"/><rect x="602" y="226" width="1" height="1" fill="#0000df"/><rect x="603" y="226" width="1" height="1" fill="#0000e8"/><rect x="604" y="226" width="1" height="1" fill="#0004ff"/><rect x="605" y="226" width="1" height="1" fill="#0042ff"/><rect x="606" y="226" width="1" height="1" fill="#0000f9"/><rect x="607" y="226" width="1" height="1" fill="#00deff"/><rect x="608" y="226" width="1" height="1" fill="#0028ff"/><rect x="609" y="226" width="1" height="1" fill="#0000ff"/><rect x="610" y="226" width="1" height="1" fill="#0000d1"/><rect x="611" y="226" width="1" height="1" fill="#0000ea"/><rect x="612" y="226" width="1" height="1" fill="#0019ff"/><rect x="613" y="226" width="1" height="1" fill="#005dff"/><rect x="614" y="226" width="1" height="1" fill="#0066ff"/><rect x="615" y="226" width="1" height="1" fill="#0020ff"/><rect x="616" y="226" width="1" height="1" fill="#0000be"/><rect x="617" y="226" width="1" height="1" fill="#0028ff"/><rect x="618" y="226" width="1" height="1" fill="#000cff"/><rect x="619" y="226" width="1" height="1" fill="#0014ff"/><rect x="20" y="154" width="1" height="1" fill="#0000d7"/><rect x="20" y="153" width="1" height="1" fill="#0000ff"/><rect x="21" y="153" width="1" height="1" fill="#0000c2"/><rect x="21" y="152" width="1" height="1" fill="#0000a0"/><rect x="22" y="150" width="1" height="1" fill="#0000c4"/><rect x="24" y="148" width="1" height="1" fill="#0000d0"/><rect x="24" y="147" width="1" height="1" fill="#0000d0"/><rect x="24" y="146" width="1" height="1" fill="#0000dc"/><rect x="25" y="146" width="1" height="1" fill="#0012ff"/><rect x="25" y="145" width="1" height="1" fill="#0000e9"/><rect x="26" y="145" width="1" height="1" fill="#0000f2"/><rect x="26" y="143" width="1" height="1" fill="#00009d"/><rect x="27" y="143" width="1" height="1" fill="#0000be"/><rect x="27" y="142" width="1" height="1" fill="#0000be"/><rect x="28" y="141" width="1" height="1" fill="#00008a"/><rect x="30" y="139" width="1" height="1" fill="#00009e"/><rect x="31" y="140" width="1" height="1" fill="#0000d6"/><rect x="32" y="138" width="1" height="1" fill="#0000c0"/><rect x="33" y="138" width="1" height="1" fill="#0000fb"/><rect x="33" y="139" width="1" height="1" fill="#0000ac"/><rect x="34" y="138" width="1" height="1" fill="#0000bc"/><rect x="36" y="136" width="1" height="1" fill="#0000b1"/><rect x="38" y="136" width="1" height="1" fill="#0000e4"/><rect x="40" y="135" width="1" height="1" fill="#000dff"/><rect x="40" y="134" width="1" height="1" fill="#0000db"/><rect x="41" y="134" width="1" height="1" fill="#0000b2"/><rect x="42" y="134" width="1" height="1" fill="#00009d"/><rect x="47" y="130" width="1" height="1" fill="#0000c3"/><rect x="47" y="131" width="1" height="1" fill="#00008e"/><rect x="48" y="129" width="1" height="1" fill="#000098"/><rect x="49" y="129" width="1" height="1" fill="#000eff"/><rect x="49" y="130" width="1" height="1" fill="#0000c1"/><rect x="50" y="128" width="1" height="1" fill="#0000ca"/><rect x="50" y="129" width="1" height="1" fill="#00008c"/><rect x="51" y="128" width="1" height="1" fill="#0000f5"/><rect x="51" y="127" width="1" height="1" fill="#000097"/><rect x="52" y="126" width="1" height="1" fill="#0000c6"/><rect x="54" y="126" width="1" height="1" fill="#002aff"/><rect x="54" y="127" width="1" height="1" fill="#0037ff"/><rect x="55" y="126" width="1" height="1" fill="#0000b8"/><rect x="56" y="126" width="1" height="1" fill="#0000fb"/><rect x="57" y="125" width="1" height="1" fill="#0000dd"/><rect x="57" y="124" width="1" height="1" fill="#0000b5"/><rect x="58" y="124" width="1" height="1" fill="#0000c6"/><rect x="58" y="125" width="1" height="1" fill="#0000a2"/><rect x="59" y="124" width="1" height="1" fill="#0000c8"/><rect x="60" y="124" width="1" height="1" fill="#004aff"/><rect x="60" y="123" width="1" height="1" fill="#0000ae"/><rect x="62" y="123" width="1" height="1" fill="#0000ca"/><rect x="62" y="122" width="1" height="1" fill="#0000c4"/><rect x="63" y="122" width="1" height="1" fill="#0000c7"/><rect x="63" y="123" width="1" height="1" fill="#0000a6"/><rect x="64" y="122" width="1" height="1" fill="#0000e4"/><rect x="65" y="121" width="1" height="1" fill="#0000ba"/><rect x="65" y="122" width="1" height="1" fill="#00008e"/><rect x="66" y="120" width="1" height="1" fill="#0033ff"/><rect x="67" y="120" width="1" height="1" fill="#00009d"/><rect x="67" y="121" width="1" height="1" fill="#0009ff"/><rect x="68" y="120" width="1" height="1" fill="#0000fc"/><rect x="68" y="119" width="1" height="1" fill="#0000bb"/><rect x="69" y="119" width="1" height="1" fill="#000093"/><rect x="69" y="120" width="1" height="1" fill="#000091"/><rect x="71" y="118" width="1" height="1" fill="#00008c"/><rect x="72" y="117" width="1" height="1" fill="#0000d2"/><rect x="73" y="118" width="1" height="1" fill="#000099"/><rect x="74" y="117" width="1" height="1" fill="#0000d6"/><rect x="74" y="116" width="1" height="1" fill="#0000e8"/><rect x="75" y="116" width="1" height="1" fill="#0016ff"/><rect x="75" y="117" width="1" height="1" fill="#0000e5"/><rect x="76" y="116" width="1" height="1" fill="#0000ca"/><rect x="77" y="115" width="1" height="1" fill="#000095"/><rect x="78" y="114" width="1" height="1" fill="#0000ff"/><rect x="81" y="113" width="1" height="1" fill="#0000bc"/><rect x="83" y="111" width="1" height="1" fill="#0000ca"/><rect x="85" y="111" width="1" height="1" fill="#0000d2"/><rect x="85" y="110" width="1" height="1" fill="#0000f2"/><rect x="86" y="110" width="1" height="1" fill="#0000aa"/><rect x="87" y="110" width="1" height="1" fill="#0000b3"/><rect x="87" y="109" width="1" height="1" fill="#0000c0"/><rect x="88" y="109" width="1" height="1" fill="#0000a1"/><rect x="89" y="109" width="1" height="1" fill="#0000c2"/><rect x="89" y="108" width="1" height="1" fill="#0000db"/><rect x="90" y="108" width="1" height="1" fill="#0000d4"/><rect x="92" y="107" width="1" height="1" fill="#0000c4"/><rect x="92" y="106" width="1" height="1" fill="#0000cf"/><rect x="93" y="107" width="1" height="1" fill="#00009d"/><rect x="94" y="106" width="1" height="1" fill="#0000e8"/><rect x="94" y="105" width="1" height="1" fill="#0000ff"/><rect x="96" y="104" width="1" height="1" fill="#0000d1"/><rect x="97" y="104" width="1" height="1" fill="#0000ef"/><rect x="97" y="105" width="1" height="1" fill="#00009e"/><rect x="98" y="104" width="1" height="1" fill="#0000e6"/><rect x="98" y="103" width="1" height="1" fill="#0000ae"/><rect x="99" y="103" width="1" height="1" fill="#0000a9"/><rect x="99" y="104" width="1" height="1" fill="#0000d7"/><rect x="100" y="102" width="1" height="1" fill="#0000b6"/><rect x="101" y="102" width="1" height="1" fill="#0000d6"/><rect x="101" y="103" width="1" height="1" fill="#0000d6"/><rect x="102" y="102" width="1" height="1" fill="#0000af"/><rect x="103" y="101" width="1" height="1" fill="#0000f6"/><rect x="104" y="101" width="1" height="1" fill="#0000e4"/><rect x="104" y="100" width="1" height="1" fill="#0000ee"/><rect x="105" y="100" width="1" height="1" fill="#0000ed"/><rect x="106" y="100" width="1" height="1" fill="#0000e3"/><rect x="106" y="99" width="1" height="1" fill="#000097"/><rect x="107" y="99" width="1" height="1" fill="#0000f1"/><rect x="108" y="98" width="1" height="1" fill="#000098"/><rect x="109" y="99" width="1" height="1" fill="#0000b2"/><rect x="109" y="98" width="1" height="1" fill="#0000ca"/><rect x="110" y="98" width="1" height="1" fill="#0000a1"/><rect x="110" y="99" width="1" height="1" fill="#0000a9"/><rect x="112" y="97" width="1" height="1" fill="#002eff"/><rect x="113" y="98" width="1" height="1" fill="#004fff"/><rect x="115" y="97" width="1" height="1" fill="#0000f4"/><rect x="115" y="96" width="1" height="1" fill="#0000c3"/><rect x="117" y="95" width="1" height="1" fill="#0000b0"/><rect x="118" y="95" width="1" height="1" fill="#0000c6"/><rect x="118" y="94" width="1" height="1" fill="#0000dd"/><rect x="119" y="94" width="1" height="1" fill="#0000d5"/><rect x="121" y="92" width="1" height="1" fill="#0000ad"/><rect x="122" y="92" width="1" height="1" fill="#001aff"/><rect x="33" y="138" width="1" height="1" fill="#00c8ff"/><rect x="42" y="133" width="1" height="1" fill="#00c8ff"/><rect x="68" y="120" width="1" height="1" fill="#00c8ff"/><rect x="90" y="108" width="1" height="1" fill="#00c8ff"/><rect x="91" y="110" width="1" height="1" fill="#00c8ff"/><rect x="100" y="101" width="1" height="1" fill="#00c8ff"/><rect x="106" y="99" width="1" height="1" fill="#00c8ff"/><rect x="108" y="99" width="1" height="1" fill="#00c8ff"/><rect x="113" y="98" width="1" height="1" fill="#00c8ff"/><rect x="79" y="114" width="1" height="1" fill="#00c8ff"/><rect x="100" y="92" width="1" height="1" fill="#0000a8"/><rect x="102" y="93" width="1" height="1" fill="#0000bb"/><rect x="102" y="92" width="1" height="1" fill="#00008a"/><rect x="105" y="92" width="1" height="1" fill="#00008f"/><rect x="109" y="91" width="1" height="1" fill="#0000ca"/><rect x="110" y="92" width="1" height="1" fill="#0000cc"/><rect x="112" y="91" width="1" height="1" fill="#0000fa"/><rect x="113" y="91" width="1" height="1" fill="#0000aa"/><rect x="117" y="91" width="1" height="1" fill="#0000a5"/><rect x="118" y="91" width="1" height="1" fill="#0000d0"/><rect x="119" y="90" width="1" height="1" fill="#0000f3"/><rect x="121" y="91" width="1" height="1" fill="#0000af"/><rect x="122" y="90" width="1" height="1" fill="#000094"/><rect x="81" y="231" width="1" height="1" fill="#1fff63"/><rect x="81" y="230" width="1" height="1" fill="#006dff"/><rect x="82" y="232" width="1" height="1" fill="#0fff73"/><rect x="82" y="231" width="1" height="1" fill="#005bff"/><rect x="83" y="232" width="1" height="1" fill="#f0ff00"/><rect x="83" y="231" width="1" height="1" fill="#00b5ff"/><rect x="84" y="232" width="1" height="1" fill="#ff9000"/><rect x="84" y="233" width="1" height="1" fill="#006aff"/><rect x="85" y="233" width="1" height="1" fill="#e2ff00"/><rect x="85" y="232" width="1" height="1" fill="#0044ff"/><rect x="86" y="234" width="1" height="1" fill="#a6ff00"/><rect x="86" y="233" width="1" height="1" fill="#0060ff"/><rect x="87" y="234" width="1" height="1" fill="#ffab00"/><rect x="87" y="233" width="1" height="1" fill="#00daff"/><rect x="88" y="234" width="1" height="1" fill="#ff5700"/><rect x="88" y="235" width="1" height="1" fill="#75ff0d"/><rect x="89" y="235" width="1" height="1" fill="#ff0000"/><rect x="89" y="234" width="1" height="1" fill="#005eff"/><rect x="96" y="240" width="1" height="1" fill="#0081ff"/><rect x="96" y="239" width="1" height="1" fill="#00008b"/><rect x="97" y="240" width="1" height="1" fill="#00e7ff"/><rect x="98" y="240" width="1" height="1" fill="#00bbff"/><rect x="99" y="241" width="1" height="1" fill="#00f2eb"/><rect x="99" y="240" width="1" height="1" fill="#0014ff"/><rect x="100" y="241" width="1" height="1" fill="#00f5d8"/><rect x="100" y="242" width="1" height="1" fill="#0000f2"/><rect x="101" y="242" width="1" height="1" fill="#00d9ff"/><rect x="101" y="241" width="1" height="1" fill="#0000e4"/><rect x="102" y="242" width="1" height="1" fill="#009bff"/><rect x="102" y="243" width="1" height="1" fill="#0000dc"/><rect x="103" y="243" width="1" height="1" fill="#007dff"/><rect x="103" y="242" width="1" height="1" fill="#0000b3"/><rect x="104" y="243" width="1" height="1" fill="#00e9ff"/><rect x="104" y="244" width="1" height="1" fill="#0000fe"/><rect x="105" y="244" width="1" height="1" fill="#00adff"/><rect x="105" y="243" width="1" height="1" fill="#005eff"/><rect x="106" y="244" width="1" height="1" fill="#00c6ff"/><rect x="106" y="243" width="1" height="1" fill="#0000ca"/><rect x="341" y="204" width="1" height="1" fill="#000fff"/><rect x="342" y="204" width="1" height="1" fill="#0000d3"/><rect x="343" y="204" width="1" height="1" fill="#0040ff"/><rect x="343" y="205" width="1" height="1" fill="#0000b9"/><rect x="344" y="205" width="1" height="1" fill="#0000ab"/><rect x="345" y="205" width="1" height="1" fill="#0000c0"/><rect x="345" y="204" width="1" height="1" fill="#0000ae"/><rect x="346" y="205" width="1" height="1" fill="#0000ea"/><rect x="346" y="206" width="1" height="1" fill="#0000df"/><rect x="347" y="205" width="1" height="1" fill="#0000f0"/><rect x="348" y="206" width="1" height="1" fill="#0000b4"/><rect x="349" y="206" width="1" height="1" fill="#000cff"/><rect x="349" y="205" width="1" height="1" fill="#0000d5"/><rect x="350" y="206" width="1" height="1" fill="#003fff"/><rect x="350" y="205" width="1" height="1" fill="#000098"/><rect x="351" y="206" width="1" height="1" fill="#004bff"/><rect x="352" y="206" width="1" height="1" fill="#004bff"/><rect x="352" y="207" width="1" height="1" fill="#00009d"/><rect x="353" y="207" width="1" height="1" fill="#007dff"/><rect x="353" y="206" width="1" height="1" fill="#0006ff"/><rect x="354" y="207" width="1" height="1" fill="#0044ff"/><rect x="354" y="206" width="1" height="1" fill="#00008e"/><rect x="355" y="207" width="1" height="1" fill="#004eff"/><rect x="355" y="208" width="1" height="1" fill="#0000d1"/><rect x="356" y="207" width="1" height="1" fill="#0017ff"/><rect x="357" y="208" width="1" height="1" fill="#0072ff"/><rect x="357" y="207" width="1" height="1" fill="#0000c0"/><rect x="358" y="208" width="1" height="1" fill="#00fba5"/><rect x="358" y="207" width="1" height="1" fill="#0086ff"/><rect x="359" y="208" width="1" height="1" fill="#00daff"/><rect x="359" y="209" width="1" height="1" fill="#0065ff"/><rect x="360" y="208" width="1" height="1" fill="#01ff81"/><rect x="360" y="209" width="1" height="1" fill="#0030ff"/><rect x="361" y="209" width="1" height="1" fill="#00f0fc"/><rect x="361" y="208" width="1" height="1" fill="#0000e0"/><rect x="362" y="209" width="1" height="1" fill="#00ff86"/><rect x="362" y="208" width="1" height="1" fill="#0000d2"/><rect x="363" y="209" width="1" height="1" fill="#0061ff"/><rect x="363" y="210" width="1" height="1" fill="#0000d1"/><rect x="364" y="209" width="1" height="1" fill="#0010ff"/><rect x="364" y="210" width="1" height="1" fill="#00008b"/><rect x="365" y="210" width="1" height="1" fill="#0020ff"/><rect x="365" y="209" width="1" height="1" fill="#00009f"/><rect x="366" y="210" width="1" height="1" fill="#005fff"/><rect x="366" y="209" width="1" height="1" fill="#0000a3"/><rect x="367" y="210" width="1" height="1" fill="#00f8bb"/><rect x="367" y="209" width="1" height="1" fill="#0068ff"/><rect x="368" y="210" width="1" height="1" fill="#00e5ff"/><rect x="368" y="211" width="1" height="1" fill="#0031ff"/><rect x="369" y="210" width="1" height="1" fill="#00d8ff"/><rect x="369" y="211" width="1" height="1" fill="#000dff"/><rect x="370" y="211" width="1" height="1" fill="#00f4e0"/><rect x="370" y="210" width="1" height="1" fill="#0088ff"/><rect x="371" y="211" width="1" height="1" fill="#002fff"/><rect x="371" y="210" width="1" height="1" fill="#0000aa"/><rect x="372" y="211" width="1" height="1" fill="#0034ff"/><rect x="372" y="212" width="1" height="1" fill="#0000ab"/><rect x="373" y="211" width="1" height="1" fill="#0000fb"/><rect x="373" y="212" width="1" height="1" fill="#0000ec"/><rect x="374" y="212" width="1" height="1" fill="#0013ff"/><rect x="375" y="212" width="1" height="1" fill="#000eff"/><rect x="375" y="211" width="1" height="1" fill="#0000c0"/><rect x="376" y="212" width="1" height="1" fill="#a5ff00"/><rect x="376" y="213" width="1" height="1" fill="#00f8bd"/><rect x="377" y="212" width="1" height="1" fill="#26ff5c"/><rect x="377" y="213" width="1" height="1" fill="#0072ff"/><rect x="378" y="213" width="1" height="1" fill="#00fc9c"/><rect x="378" y="212" width="1" height="1" fill="#0012ff"/><rect x="379" y="213" width="1" height="1" fill="#16ff6c"/><rect x="379" y="212" width="1" height="1" fill="#0055ff"/><rect x="380" y="213" width="1" height="1" fill="#6eff14"/><rect x="380" y="214" width="1" height="1" fill="#0071ff"/><rect x="381" y="213" width="1" height="1" fill="#0000ff"/><rect x="382" y="214" width="1" height="1" fill="#0000dc"/><rect x="382" y="213" width="1" height="1" fill="#0000a2"/><rect x="383" y="214" width="1" height="1" fill="#0043ff"/><rect x="384" y="214" width="1" height="1" fill="#0000e7"/><rect x="384" y="215" width="1" height="1" fill="#000099"/><rect x="385" y="215" width="1" height="1" fill="#00b3ff"/><rect x="385" y="214" width="1" height="1" fill="#0000fe"/><rect x="386" y="215" width="1" height="1" fill="#00c2ff"/><rect x="386" y="214" width="1" height="1" fill="#0000d9"/><rect x="387" y="215" width="1" height="1" fill="#0071ff"/><rect x="387" y="216" width="1" height="1" fill="#0000d8"/><rect x="388" y="215" width="1" height="1" fill="#0037ff"/><rect x="388" y="216" width="1" height="1" fill="#0000bd"/><rect x="389" y="216" width="1" height="1" fill="#0062ff"/><rect x="389" y="215" width="1" height="1" fill="#0000f4"/><rect x="390" y="216" width="1" height="1" fill="#00f4df"/><rect x="390" y="217" width="1" height="1" fill="#0044ff"/><rect x="391" y="216" width="1" height="1" fill="#00bbff"/><rect x="391" y="217" width="1" height="1" fill="#001bff"/><rect x="392" y="217" width="1" height="1" fill="#00f7c2"/><rect x="392" y="216" width="1" height="1" fill="#0067ff"/><rect x="393" y="217" width="1" height="1" fill="#00ff82"/><rect x="393" y="216" width="1" height="1" fill="#0021ff"/><rect x="397" y="218" width="1" height="1" fill="#0041ff"/><rect x="397" y="219" width="1" height="1" fill="#000094"/><rect x="398" y="219" width="1" height="1" fill="#00f7c3"/><rect x="398" y="218" width="1" height="1" fill="#0000c9"/><rect x="399" y="219" width="1" height="1" fill="#52ff30"/><rect x="399" y="220" width="1" height="1" fill="#005cff"/><rect x="400" y="220" width="1" height="1" fill="#00fd95"/><rect x="400" y="219" width="1" height="1" fill="#002dff"/><rect x="401" y="220" width="1" height="1" fill="#00fba3"/><rect x="401" y="221" width="1" height="1" fill="#0064ff"/><rect x="402" y="220" width="1" height="1" fill="#43ff3f"/><rect x="402" y="221" width="1" height="1" fill="#0000fb"/><rect x="403" y="221" width="1" height="1" fill="#18ff6a"/><rect x="403" y="220" width="1" height="1" fill="#0060ff"/><rect x="404" y="221" width="1" height="1" fill="#0022ff"/><rect x="404" y="222" width="1" height="1" fill="#0000af"/><rect x="405" y="222" width="1" height="1" fill="#ff0000"/><rect x="405" y="221" width="1" height="1" fill="#ffe200"/><rect x="406" y="222" width="1" height="1" fill="#ff0000"/><rect x="406" y="221" width="1" height="1" fill="#ffcd00"/><rect x="407" y="222" width="1" height="1" fill="#ffa300"/><rect x="407" y="223" width="1" height="1" fill="#dbff00"/><rect x="408" y="223" width="1" height="1" fill="#ff3300"/><rect x="408" y="222" width="1" height="1" fill="#aeff00"/><rect x="409" y="223" width="1" height="1" fill="#d0ff00"/><rect x="409" y="224" width="1" height="1" fill="#8dff00"/><rect x="410" y="223" width="1" height="1" fill="#68ff1a"/><rect x="410" y="224" width="1" height="1" fill="#00edff"/><rect x="411" y="224" width="1" height="1" fill="#b2ff00"/><rect x="411" y="223" width="1" height="1" fill="#00e4ff"/><rect x="412" y="224" width="1" height="1" fill="#53ff2f"/><rect x="412" y="225" width="1" height="1" fill="#00f3e5"/><rect x="413" y="224" width="1" height="1" fill="#cbff00"/><rect x="413" y="225" width="1" height="1" fill="#19ff69"/><rect x="414" y="225" width="1" height="1" fill="#ff0000"/><rect x="414" y="224" width="1" height="1" fill="#ffc600"/><rect x="415" y="225" width="1" height="1" fill="#ff4300"/><rect x="415" y="226" width="1" height="1" fill="#9eff00"/><rect x="416" y="226" width="1" height="1" fill="#ff3b00"/><rect x="416" y="225" width="1" height="1" fill="#a5ff00"/><rect x="417" y="226" width="1" height="1" fill="#ff0000"/><rect x="417" y="225" width="1" height="1" fill="#ffc700"/><rect x="418" y="226" width="1" height="1" fill="#ffad00"/><rect x="418" y="227" width="1" height="1" fill="#82ff00"/><rect x="419" y="227" width="1" height="1" fill="#ff6d00"/><rect x="419" y="226" width="1" height="1" fill="#4cff36"/><rect x="420" y="227" width="1" height="1" fill="#ff0000"/><rect x="420" y="226" width="1" height="1" fill="#ffa000"/><rect x="421" y="227" width="1" height="1" fill="#ffb400"/><rect x="421" y="228" width="1" height="1" fill="#89ff00"/><rect x="422" y="228" width="1" height="1" fill="#ff8b00"/><rect x="422" y="227" width="1" height="1" fill="#32ff50"/><rect x="423" y="228" width="1" height="1" fill="#ffc900"/><rect x="423" y="227" width="1" height="1" fill="#1eff64"/><rect x="424" y="228" width="1" height="1" fill="#40ff42"/><rect x="424" y="229" width="1" height="1" fill="#00abff"/><rect x="425" y="228" width="1" height="1" fill="#cbff00"/><rect x="425" y="229" width="1" height="1" fill="#6bff17"/><rect x="426" y="229" width="1" height="1" fill="#a2ff00"/><rect x="426" y="228" width="1" height="1" fill="#00f5d1"/><rect x="427" y="229" width="1" height="1" fill="#75ff0d"/><rect x="427" y="228" width="1" height="1" fill="#00e2ff"/><rect x="428" y="229" width="1" height="1" fill="#57ff2b"/><rect x="428" y="230" width="1" height="1" fill="#00ff84"/><rect x="429" y="230" width="1" height="1" fill="#ff0000"/><rect x="429" y="229" width="1" height="1" fill="#ffcc00"/><rect x="430" y="230" width="1" height="1" fill="#ff0c00"/><rect x="430" y="229" width="1" height="1" fill="#d6ff00"/><rect x="431" y="230" width="1" height="1" fill="#ff2800"/><rect x="431" y="231" width="1" height="1" fill="#bfff00"/><rect x="432" y="230" width="1" height="1" fill="#ff2000"/><rect x="432" y="231" width="1" height="1" fill="#a7ff00"/><rect x="433" y="231" width="1" height="1" fill="#ff0000"/><rect x="433" y="230" width="1" height="1" fill="#daff00"/><rect x="434" y="231" width="1" height="1" fill="#ff3200"/><rect x="434" y="230" width="1" height="1" fill="#b9ff00"/><rect x="435" y="231" width="1" height="1" fill="#ff0000"/><rect x="435" y="232" width="1" height="1" fill="#ffc100"/><rect x="436" y="232" width="1" height="1" fill="#ff7500"/><rect x="436" y="231" width="1" height="1" fill="#51ff31"/><rect x="437" y="232" width="1" height="1" fill="#68ff1a"/><rect x="437" y="231" width="1" height="1" fill="#00f6d1"/><rect x="438" y="232" width="1" height="1" fill="#32ff50"/><rect x="438" y="233" width="1" height="1" fill="#00f2f2"/><rect x="439" y="232" width="1" height="1" fill="#aeff00"/><rect x="439" y="233" width="1" height="1" fill="#00faa8"/><rect x="440" y="233" width="1" height="1" fill="#a0ff00"/><rect x="440" y="232" width="1" height="1" fill="#00f6cc"/><rect x="441" y="233" width="1" height="1" fill="#33ff4f"/><rect x="441" y="232" width="1" height="1" fill="#00f2ec"/><rect x="442" y="233" width="1" height="1" fill="#002fff"/><rect x="442" y="234" width="1" height="1" fill="#00009b"/><rect x="443" y="234" width="1" height="1" fill="#0000fc"/><rect x="444" y="234" width="1" height="1" fill="#001eff"/><rect x="444" y="233" width="1" height="1" fill="#0000a9"/><rect x="445" y="234" width="1" height="1" fill="#0068ff"/><rect x="445" y="235" width="1" height="1" fill="#0000e6"/><rect x="446" y="234" width="1" height="1" fill="#006eff"/><rect x="446" y="235" width="1" height="1" fill="#0000db"/><rect x="447" y="235" width="1" height="1" fill="#004aff"/><rect x="447" y="234" width="1" height="1" fill="#0000dc"/><rect x="448" y="235" width="1" height="1" fill="#0058ff"/><rect x="448" y="236" width="1" height="1" fill="#0000f5"/><rect x="449" y="235" width="1" height="1" fill="#0017ff"/><rect x="449" y="236" width="1" height="1" fill="#0000ba"/><rect x="450" y="236" width="1" height="1" fill="#003dff"/><rect x="450" y="235" width="1" height="1" fill="#0000f1"/><rect x="451" y="236" width="1" height="1" fill="#00faaf"/><rect x="451" y="235" width="1" height="1" fill="#0020ff"/><rect x="452" y="236" width="1" height="1" fill="#00f6ca"/><rect x="452" y="237" width="1" height="1" fill="#0056ff"/><rect x="453" y="237" width="1" height="1" fill="#00f4e1"/><rect x="453" y="236" width="1" height="1" fill="#0067ff"/><rect x="454" y="237" width="1" height="1" fill="#00f5d4"/><rect x="454" y="236" width="1" height="1" fill="#0000ee"/><rect x="455" y="237" width="1" height="1" fill="#00f6d1"/><rect x="455" y="238" width="1" height="1" fill="#0056ff"/><rect x="456" y="237" width="1" height="1" fill="#000aff"/><rect x="456" y="238" width="1" height="1" fill="#0000c0"/><rect x="457" y="238" width="1" height="1" fill="#0000af"/><rect x="457" y="237" width="1" height="1" fill="#0000cc"/><rect x="458" y="238" width="1" height="1" fill="#0000ed"/><rect x="459" y="238" width="1" height="1" fill="#0023ff"/><rect x="460" y="238" width="1" height="1" fill="#0042ff"/><rect x="460" y="239" width="1" height="1" fill="#000092"/><rect x="461" y="238" width="1" height="1" fill="#0000f0"/><rect x="462" y="239" width="1" height="1" fill="#0056ff"/><rect x="462" y="238" width="1" height="1" fill="#0000fa"/><rect x="463" y="239" width="1" height="1" fill="#0025ff"/><rect x="463" y="238" width="1" height="1" fill="#0000b7"/><rect x="464" y="239" width="1" height="1" fill="#0084ff"/><rect x="464" y="240" width="1" height="1" fill="#0000ee"/><rect x="465" y="239" width="1" height="1" fill="#006dff"/><rect x="465" y="240" width="1" height="1" fill="#0000ff"/><rect x="466" y="240" width="1" height="1" fill="#0059ff"/><rect x="466" y="239" width="1" height="1" fill="#0000df"/><rect x="467" y="240" width="1" height="1" fill="#006fff"/><rect x="467" y="239" width="1" height="1" fill="#0000dc"/><rect x="468" y="240" width="1" height="1" fill="#003aff"/><rect x="468" y="239" width="1" height="1" fill="#000097"/><rect x="469" y="240" width="1" height="1" fill="#0000cf"/><rect x="470" y="240" width="1" height="1" fill="#0023ff"/><rect x="470" y="241" width="1" height="1" fill="#0000dc"/><rect x="471" y="241" width="1" height="1" fill="#0022ff"/><rect x="472" y="241" width="1" height="1" fill="#0056ff"/><rect x="472" y="240" width="1" height="1" fill="#0000fe"/><rect x="473" y="241" width="1" height="1" fill="#0044ff"/><rect x="473" y="240" width="1" height="1" fill="#0000ca"/><rect x="474" y="241" width="1" height="1" fill="#0042ff"/><rect x="474" y="240" width="1" height="1" fill="#0000b9"/><rect x="475" y="241" width="1" height="1" fill="#007bff"/><rect x="475" y="240" width="1" height="1" fill="#0000b2"/><rect x="476" y="241" width="1" height="1" fill="#000eff"/><rect x="477" y="241" width="1" height="1" fill="#001aff"/><rect x="478" y="241" width="1" height="1" fill="#0013ff"/><rect x="478" y="242" width="1" height="1" fill="#0000ad"/><rect x="479" y="241" width="1" height="1" fill="#0069ff"/><rect x="479" y="242" width="1" height="1" fill="#000091"/><rect x="480" y="241" width="1" height="1" fill="#003aff"/><rect x="480" y="242" width="1" height="1" fill="#000098"/><rect x="481" y="242" width="1" height="1" fill="#0012ff"/><rect x="481" y="241" width="1" height="1" fill="#000090"/><rect x="482" y="242" width="1" height="1" fill="#0047ff"/><rect x="483" y="242" width="1" height="1" fill="#0080ff"/><rect x="483" y="241" width="1" height="1" fill="#0000d7"/><rect x="484" y="242" width="1" height="1" fill="#00faae"/><rect x="484" y="241" width="1" height="1" fill="#0000ee"/><rect x="485" y="242" width="1" height="1" fill="#49ff39"/><rect x="485" y="243" width="1" height="1" fill="#0094ff"/><rect x="486" y="242" width="1" height="1" fill="#3dff45"/><rect x="486" y="243" width="1" height="1" fill="#0074ff"/><rect x="487" y="242" width="1" height="1" fill="#75ff0d"/><rect x="487" y="243" width="1" height="1" fill="#00cdff"/><rect x="488" y="242" width="1" height="1" fill="#90ff00"/><rect x="488" y="243" width="1" height="1" fill="#00a0ff"/><rect x="489" y="242" width="1" height="1" fill="#42ff40"/><rect x="489" y="243" width="1" height="1" fill="#005bff"/><rect x="490" y="243" width="1" height="1" fill="#0aff78"/><rect x="490" y="242" width="1" height="1" fill="#0046ff"/><rect x="491" y="243" width="1" height="1" fill="#0036ff"/><rect x="491" y="242" width="1" height="1" fill="#0000ba"/><rect x="492" y="243" width="1" height="1" fill="#0035ff"/><rect x="492" y="242" width="1" height="1" fill="#0000b5"/><rect x="493" y="243" width="1" height="1" fill="#003cff"/><rect x="493" y="242" width="1" height="1" fill="#0000a7"/><rect x="503" y="244" width="1" height="1" fill="#0089ff"/><rect x="503" y="245" width="1" height="1" fill="#0000e3"/><rect x="504" y="244" width="1" height="1" fill="#008bff"/><rect x="504" y="245" width="1" height="1" fill="#0000bf"/><rect x="505" y="245" width="1" height="1" fill="#0067ff"/><rect x="505" y="244" width="1" height="1" fill="#0000b3"/><rect x="506" y="245" width="1" height="1" fill="#00c8ff"/><rect x="506" y="244" width="1" height="1" fill="#0000fe"/><rect x="507" y="245" width="1" height="1" fill="#00c5ff"/><rect x="507" y="244" width="1" height="1" fill="#0000f5"/><rect x="508" y="245" width="1" height="1" fill="#00a8ff"/><rect x="508" y="246" width="1" height="1" fill="#0000e3"/><rect x="509" y="245" width="1" height="1" fill="#0043ff"/><rect x="509" y="246" width="1" height="1" fill="#0000d3"/><rect x="510" y="245" width="1" height="1" fill="#00adff"/><rect x="510" y="246" width="1" height="1" fill="#0000f4"/><rect x="525" y="247" width="1" height="1" fill="#0063ff"/><rect x="525" y="246" width="1" height="1" fill="#0010ff"/><rect x="526" y="247" width="1" height="1" fill="#0087ff"/><rect x="526" y="246" width="1" height="1" fill="#0000db"/><rect x="527" y="247" width="1" height="1" fill="#0070ff"/><rect x="527" y="246" width="1" height="1" fill="#0000b2"/><rect x="528" y="247" width="1" height="1" fill="#0072ff"/><rect x="528" y="246" width="1" height="1" fill="#0000a1"/><rect x="529" y="247" width="1" height="1" fill="#002dff"/><rect x="530" y="247" width="1" height="1" fill="#0018ff"/><rect x="530" y="246" width="1" height="1" fill="#000090"/><rect x="531" y="247" width="1" height="1" fill="#0071ff"/><rect x="531" y="246" width="1" height="1" fill="#0000f0"/><rect x="532" y="247" width="1" height="1" fill="#006fff"/><rect x="532" y="246" width="1" height="1" fill="#0000b1"/><rect x="533" y="247" width="1" height="1" fill="#0077ff"/><rect x="533" y="246" width="1" height="1" fill="#0000a7"/><rect x="534" y="247" width="1" height="1" fill="#0000f6"/><rect x="534" y="246" width="1" height="1" fill="#0000aa"/><rect x="535" y="247" width="1" height="1" fill="#003eff"/><rect x="535" y="246" width="1" height="1" fill="#00009e"/><rect x="536" y="247" width="1" height="1" fill="#0048ff"/><rect x="536" y="246" width="1" height="1" fill="#0021ff"/><rect x="537" y="247" width="1" height="1" fill="#0090ff"/><rect x="537" y="246" width="1" height="1" fill="#0000c4"/><rect x="164" y="219" width="1" height="3" fill="#ff4040"/><rect x="164" y="222" width="1" height="2" fill="#40ff40"/><rect x="164" y="224" width="1" height="2" fill="#00a0ff"/><rect x="255" y="221" width="1" height="9" fill="#00b0ff"/><rect x="255" y="223" width="1" height="4" fill="#00ffe0"/><rect x="311" y="223" width="1" height="3" fill="#ff3030"/><rect x="311" y="226" width="1" height="3" fill="#ffb000"/><rect x="433" y="206" width="1" height="11" fill="#0070ff"/><rect x="433" y="209" width="1" height="5" fill="#00e0e0"/><rect x="465" y="227" width="1" height="2" fill="#ff2020"/><rect x="465" y="229" width="1" height="2" fill="#ffff00"/><rect x="465" y="231" width="1" height="3" fill="#40ff40"/><path d="M20,400 L20,391 L21,391 L21,391 L22,391 L22,398 L23,398 L23,396 L24,396 L24,397 L25,397 L25,396 L26,396 L26,399 L27,399 L27,398 L28,398 L28,399 L29,399 L29,397 L30,397 L30,398 L31,398 L31,397 L32,397 L32,397 L33,397 L33,398 L34,398 L34,396 L35,396 L35,397 L36,397 L36,398 L37,398 L37,398 L38,398 L38,397 L39,397 L39,399 L40,399 L40,398 L41,398 L41,397 L42,397 L42,398 L43,398 L43,397 L44,397 L44,397 L45,397 L45,397 L46,397 L46,399 L47,399 L47,398 L48,398 L48,398 L49,398 L49,398 L50,398 L50,399 L51,399 L51,397 L52,397 L52,397 L53,397 L53,399 L54,399 L54,396 L55,396 L55,397 L56,397 L56,398 L57,398 L57,399 L58,399 L58,397 L59,397 L59,395 L60,395 L60,398 L61,398 L61,397 L62,397 L62,397 L63,397 L63,398 L64,398 L64,398 L65,398 L65,398 L66,398 L66,397 L67,397 L67,399 L68,399 L68,399 L69,399 L69,398 L70,398 L70,397 L71,397 L71,398 L72,398 L72,398 L73,398 L73,397 L74,397 L74,397 L75,397 L75,399 L76,399 L76,398 L77,398 L77,397 L78,397 L78,398 L79,398 L79,398 L80,398 L80,398 L81,398 L81,394 L82,394 L82,398 L83,398 L83,396 L84,396 L84,395 L85,395 L85,397 L86,397 L86,396 L87,396 L87,396 L88,396 L88,397 L89,397 L89,397 L90,397 L90,395 L91,395 L91,397 L92,397 L92,397 L93,397 L93,394 L94,394 L94,394 L95,394 L95,396 L96,396 L96,393 L97,393 L97,395 L98,395 L98,396 L99,396 L99,396 L100,396 L100,395 L101,395 L101,393 L102,393 L102,397 L103,397 L103,395 L104,395 L104,396 L105,396 L105,395 L106,395 L106,393 L107,393 L107,393 L108,393 L108,392 L109,392 L109,395 L110,395 L110,392 L111,392 L111,393 L112,393 L112,393 L113,393 L113,393 L114,393 L114,393 L115,393 L115,396 L116,396 L116,394 L117,394 L117,392 L118,392 L118,396 L119,396 L119,396 L120,396 L120,397 L121,397 L121,395 L122,395 L122,395 L123,395 L123,396 L124,396 L124,394 L125,394 L125,395 L126,395 L126,395 L127,395 L127,396 L128,396 L128,398 L129,398 L129,396 L130,396 L130,397 L131,397 L131,396 L132,396 L132,396 L133,396 L133,395 L134,395 L134,395 L135,395 L135,393 L136,393 L136,394 L137,394 L137,394 L138,394 L138,396 L139,396 L139,396 L140,396 L140,396 L141,396 L141,397 L142,397 L142,395 L143,395 L143,396 L144,396 L144,397 L145,397 L145,395 L146,395 L146,396 L147,396 L147,395 L148,395 L148,393 L149,393 L149,395 L150,395 L150,394 L151,394 L151,395 L152,395 L152,394 L153,394 L153,394 L154,394 L154,391 L155,391 L155,396 L156,396 L156,395 L157,395 L157,393 L158,393 L158,393 L159,393 L159,394 L160,394 L160,394 L161,394 L161,394 L162,394 L162,397 L163,397 L163,395 L164,395 L164,396 L165,396 L165,398 L166,398 L166,397 L167,397 L167,395 L168,395 L168,396 L169,396 L169,395 L170,395 L170,396 L171,396 L171,398 L172,398 L172,396 L173,396 L173,398 L174,398 L174,397 L175,397 L175,395 L176,395 L176,395 L177,395 L177,398 L178,398 L178,395 L179,395 L179,395 L180,395 L180,397 L181,397 L181,396 L182,396 L182,396 L183,396 L183,397 L184,397 L184,394 L185,394 L185,396 L186,396 L186,395 L187,395 L187,394 L188,394 L188,395 L189,395 L189,397 L190,397 L190,395 L191,395 L191,394 L192,394 L192,394 L193,394 L193,397 L194,397 L194,397 L195,397 L195,394 L196,394 L196,398 L197,398 L197,395 L198,395 L198,394 L199,394 L199,395 L200,395 L200,397 L201,397 L201,397 L202,397 L202,397 L203,397 L203,396 L204,396 L204,396 L205,396 L205,395 L206,395 L206,397 L207,397 L207,396 L208,396 L208,397 L209,397 L209,395 L210,395 L210,396 L211,396 L211,396 L212,396 L212,395 L213,395 L213,395 L214,395 L214,396 L215,396 L215,395 L216,395 L216,397 L217,397 L217,397 L218,397 L218,395 L219,395 L219,397 L220,397 L220,397 L221,397 L221,398 L222,398 L222,396 L223,396 L223,396 L224,396 L224,396 L225,396 L225,397 L226,397 L226,397 L227,397 L227,397 L228,397 L228,396 L229,396 L229,397 L230,397 L230,397 L231,397 L231,393 L232,393 L232,392 L233,392 L233,393 L234,393 L234,392 L235,392 L235,392 L236,392 L236,393 L237,393 L237,395 L238,395 L238,394 L239,394 L239,393 L240,393 L240,395 L241,395 L241,397 L242,397 L242,397 L243,397 L243,397 L244,397 L244,395 L245,395 L245,396 L246,396 L246,395 L247,395 L247,395 L248,395 L248,395 L249,395 L249,395 L250,395 L250,393 L251,393 L251,394 L252,394 L252,396 L253,396 L253,395 L254,395 L254,396 L255,396 L255,394 L256,394 L256,395 L257,395 L257,396 L258,396 L258,395 L259,395 L259,395 L260,395 L260,398 L261,398 L261,395 L262,395 L262,395 L263,395 L263,395 L264,395 L264,396 L265,396 L265,396 L266,396 L266,397 L267,397 L267,397 L268,397 L268,395 L269,395 L269,395 L270,395 L270,394 L271,394 L271,394 L272,394 L272,396 L273,396 L273,397 L274,397 L274,397 L275,397 L275,397 L276,397 L276,397 L277,397 L277,396 L278,396 L278,398 L279,398 L279,396 L280,396 L280,396 L281,396 L281,396 L282,396 L282,398 L283,398 L283,396 L284,396 L284,396 L285,396 L285,395 L286,395 L286,395 L287,395 L287,394 L288,394 L288,394 L289,394 L289,395 L290,395 L290,395 L291,395 L291,395 L292,395 L292,394 L293,394 L293,395 L294,395 L294,395 L295,395 L295,393 L296,393 L296,396 L297,396 L297,394 L298,394 L298,394 L299,394 L299,396 L300,396 L300,395 L301,395 L301,394 L302,394 L302,395 L303,395 L303,396 L304,396 L304,396 L305,396 L305,395 L306,395 L306,395 L307,395 L307,395 L308,395 L308,395 L309,395 L309,394 L310,394 L310,395 L311,395 L311,395 L312,395 L312,395 L313,395 L313,395 L314,395 L314,395 L315,395 L315,395 L316,395 L316,395 L317,395 L317,397 L318,397 L318,394 L319,394 L319,396 L320,396 L320,395 L321,395 L321,394 L322,394 L322,396 L323,396 L323,396 L324,396 L324,393 L325,393 L325,396 L326,396 L326,396 L327,396 L327,395 L328,395 L328,397 L329,397 L329,396 L330,396 L330,395 L331,395 L331,396 L332,396 L332,395 L333,395 L333,394 L334,394 L334,394 L335,394 L335,396 L336,396 L336,395 L337,395 L337,396 L338,396 L338,396 L339,396 L339,395 L340,395 L340,395 L341,395 L341,398 L342,398 L342,398 L343,398 L343,397 L344,397 L344,395 L345,395 L345,395 L346,395 L346,395 L347,395 L347,397 L348,397 L348,396 L349,396 L349,396 L350,396 L350,395 L351,395 L351,396 L352,396 L352,395 L353,395 L353,396 L354,396 L354,397 L355,397 L355,397 L356,397 L356,396 L357,396 L357,395 L358,395 L358,396 L359,396 L359,398 L360,398 L360,394 L361,394 L361,393 L362,393 L362,395 L363,395 L363,394 L364,394 L364,397 L365,397 L365,393 L366,393 L366,394 L367,394 L367,394 L368,394 L368,394 L369,394 L369,393 L370,393 L370,392 L371,392 L371,392 L372,392 L372,395 L373,395 L373,395 L374,395 L374,394 L375,394 L375,398 L376,398 L376,396 L377,396 L377,397 L378,397 L378,395 L379,395 L379,396 L380,396 L380,395 L381,395 L381,395 L382,395 L382,396 L383,396 L383,396 L384,396 L384,396 L385,396 L385,395 L386,395 L386,393 L387,393 L387,394 L388,394 L388,396 L389,396 L389,395 L390,395 L390,394 L391,394 L391,396 L392,396 L392,394 L393,394 L393,394 L394,394 L394,396 L395,396 L395,395 L396,395 L396,397 L397,397 L397,396 L398,396 L398,396 L399,396 L399,397 L400,397 L400,393 L401,393 L401,395 L402,395 L402,394 L403,394 L403,392 L404,392 L404,395 L405,395 L405,397 L406,397 L406,395 L407,395 L407,397 L408,397 L408,395 L409,395 L409,395 L410,395 L410,391 L411,391 L411,396 L412,396 L412,395 L413,395 L413,395 L414,395 L414,395 L415,395 L415,394 L416,394 L416,397 L417,397 L417,396 L418,396 L418,396 L419,396 L419,396 L420,396 L420,395 L421,395 L421,391 L422,391 L422,396 L423,396 L423,395 L424,395 L424,395 L425,395 L425,397 L426,397 L426,397 L427,397 L427,396 L428,396 L428,396 L429,396 L429,396 L430,396 L430,397 L431,397 L431,395 L432,395 L432,396 L433,396 L433,396 L434,396 L434,397 L435,397 L435,395 L436,395 L436,396 L437,396 L437,395 L438,395 L438,395 L439,395 L439,395 L440,395 L440,396 L441,396 L441,397 L442,397 L442,395 L443,395 L443,395 L444,395 L444,395 L445,395 L445,396 L446,396 L446,397 L447,397 L447,394 L448,394 L448,396 L449,396 L449,395 L450,395 L450,397 L451,397 L451,395 L452,395 L452,395 L453,395 L453,395 L454,395 L454,396 L455,396 L455,395 L456,395 L456,396 L457,396 L457,396 L458,396 L458,396 L459,396 L459,396 L460,396 L460,397 L461,397 L461,395 L462,395 L462,396 L463,396 L463,396 L464,396 L464,394 L465,394 L465,396 L466,396 L466,395 L467,395 L467,395 L468,395 L468,395 L469,395 L469,396 L470,396 L470,396 L471,396 L471,396 L472,396 L472,395 L473,395 L473,397 L474,397 L474,396 L475,396 L475,395 L476,395 L476,396 L477,396 L477,397 L478,397 L478,396 L479,396 L479,397 L480,397 L480,396 L481,396 L481,397 L482,397 L482,398 L483,398 L483,396 L484,396 L484,394 L485,394 L485,398 L486,398 L486,391 L487,391 L487,391 L488,391 L488,390 L489,390 L489,392 L490,392 L490,397 L491,397 L491,397 L492,397 L492,395 L493,395 L493,397 L494,397 L494,396 L495,396 L495,395 L496,395 L496,396 L497,396 L497,396 L498,396 L498,396 L499,396 L499,396 L500,396 L500,393 L501,393 L501,397 L502,397 L502,395 L503,395 L503,396 L504,396 L504,395 L505,395 L505,396 L506,396 L506,396 L507,396 L507,394 L508,394 L508,396 L509,396 L509,396 L510,396 L510,394 L511,394 L511,393 L512,393 L512,395 L513,395 L513,395 L514,395 L514,396 L515,396 L515,396 L516,396 L516,397 L517,397 L517,396 L518,396 L518,395 L519,395 L519,396 L520,396 L520,393 L521,393 L521,395 L522,395 L522,395 L523,395 L523,396 L524,396 L524,396 L525,396 L525,396 L526,396 L526,397 L527,397 L527,395 L528,395 L528,396 L529,396 L529,396 L530,396 L530,396 L531,396 L531,396 L532,396 L532,395 L533,395 L533,396 L534,396 L534,396 L535,396 L535,397 L536,397 L536,396 L537,396 L537,396 L538,396 L538,399 L539,399 L539,396 L540,396 L540,396 L541,396 L541,397 L542,397 L542,395 L543,395 L543,396 L544,396 L544,397 L545,397 L545,396 L546,396 L546,397 L547,397 L547,397 L548,397 L548,397 L549,397 L549,395 L550,395 L550,396 L551,396 L551,395 L552,395 L552,397 L553,397 L553,396 L554,396 L554,394 L555,394 L555,396 L556,396 L556,395 L557,395 L557,397 L558,397 L558,395 L559,395 L559,393 L560,393 L560,395 L561,395 L561,397 L562,397 L562,396 L563,396 L563,395 L564,395 L564,396 L565,396 L565,396 L566,396 L566,397 L567,397 L567,397 L568,397 L568,396 L569,396 L569,395 L570,395 L570,396 L571,396 L571,396 L572,396 L572,396 L573,396 L573,396 L574,396 L574,394 L575,394 L575,396 L576,396 L576,396 L577,396 L577,396 L578,396 L578,396 L579,396 L579,395 L580,395 L580,396 L581,396 L581,397 L582,397 L582,395 L583,395 L583,396 L584,396 L584,395 L585,395 L585,396 L586,396 L586,396 L587,396 L587,394 L588,394 L588,397 L589,397 L589,395 L590,395 L590,396 L591,396 L591,394 L592,394 L592,390 L593,390 L593,392 L594,392 L594,390 L595,390 L595,390 L596,390 L596,391 L597,391 L597,390 L598,390 L598,395 L599,395 L599,398 L600,398 L600,395 L601,395 L601,396 L602,396 L602,396 L603,396 L603,396 L604,396 L604,396 L605,396 L605,397 L606,397 L606,396 L607,396 L607,396 L608,396 L608,396 L609,396 L609,394 L610,394 L610,396 L611,396 L611,396 L612,396 L612,396 L613,396 L613,396 L614,396 L614,397 L615,397 L615,394 L616,394 L616,395 L617,395 L617,395 L618,395 L618,395 L619,395 L619,396 L620,396 L620,400 Z" fill="#00ffff"/><rect x="164" y="378" width="1" height="22" fill="#ffff00"/><rect x="255" y="389" width="1" height="11" fill="#ffff00"/><rect x="311" y="382" width="1" height="18" fill="#ffff00"/><rect x="361" y="390" width="1" height="10" fill="#ffff00"/><rect x="364" y="390" width="1" height="10" fill="#ffff00"/><rect x="375" y="390" width="1" height="10" fill="#ffff00"/><rect x="377" y="389" width="1" height="11" fill="#ffff00"/><rect x="378" y="389" width="1" height="11" fill="#ffff00"/><rect x="387" y="391" width="1" height="9" fill="#ffff00"/><rect x="390" y="389" width="1" height="11" fill="#ffff00"/><rect x="465" y="382" width="1" height="18" fill="#ffff00"/><rect x="485" y="390" width="1" height="10" fill="#ffff00"/><rect x="81" y="390" width="1" height="10" fill="#ffff00"/><rect x="82" y="389" width="1" height="11" fill="#ffff00"/><rect x="83" y="387" width="1" height="13" fill="#ffff00"/><rect x="84" y="386" width="1" height="14" fill="#ffff00"/><rect x="85" y="386" width="1" height="14" fill="#ffff00"/><rect x="86" y="386" width="1" height="14" fill="#ffff00"/><rect x="87" y="386" width="1" height="14" fill="#ffff00"/><rect x="88" y="388" width="1" height="12" fill="#ffff00"/><rect x="400" y="389" width="1" height="11" fill="#ffff00"/><rect x="401" y="389" width="1" height="11" fill="#ffff00"/><rect x="402" y="390" width="1" height="10" fill="#ffff00"/><rect x="403" y="390" width="1" height="10" fill="#ffff00"/><rect x="404" y="385" width="1" height="15" fill="#ffff00"/><rect x="405" y="384" width="1" height="16" fill="#ffff00"/><rect x="406" y="383" width="1" height="17" fill="#ffff00"/><rect x="407" y="382" width="1" height="18" fill="#ffff00"/><rect x="408" y="382" width="1" height="18" fill="#ffff00"/><rect x="409" y="384" width="1" height="16" fill="#ffff00"/><rect x="411" y="386" width="1" height="14" fill="#ffff00"/><rect x="412" y="385" width="1" height="15" fill="#ffff00"/><rect x="413" y="384" width="1" height="16" fill="#ffff00"/><rect x="414" y="383" width="1" height="17" fill="#ffff00"/><rect x="415" y="383" width="1" height="17" fill="#ffff00"/><rect x="416" y="384" width="1" height="16" fill="#ffff00"/><rect x="417" y="384" width="1" height="16" fill="#ffff00"/><rect x="418" y="385" width="1" height="15" fill="#ffff00"/><rect x="419" y="385" width="1" height="15" fill="#ffff00"/><rect x="420" y="386" width="1" height="14" fill="#ffff00"/><rect x="422" y="387" width="1" height="13" fill="#ffff00"/><rect x="423" y="386" width="1" height="14" fill="#ffff00"/><rect x="424" y="386" width="1" height="14" fill="#ffff00"/><rect x="425" y="385" width="1" height="15" fill="#ffff00"/><rect x="426" y="385" width="1" height="15" fill="#ffff00"/><rect x="427" y="384" width="1" height="16" fill="#ffff00"/><rect x="428" y="384" width="1" height="16" fill="#ffff00"/><rect x="429" y="384" width="1" height="16" fill="#ffff00"/><rect x="430" y="384" width="1" height="16" fill="#ffff00"/><rect x="431" y="384" width="1" height="16" fill="#ffff00"/><rect x="432" y="384" width="1" height="16" fill="#ffff00"/><rect x="433" y="385" width="1" height="15" fill="#ffff00"/><rect x="434" y="384" width="1" height="16" fill="#ffff00"/><rect x="435" y="385" width="1" height="15" fill="#ffff00"/><rect x="436" y="386" width="1" height="14" fill="#ffff00"/><rect x="437" y="385" width="1" height="15" fill="#ffff00"/><rect x="438" y="386" width="1" height="14" fill="#ffff00"/><rect x="439" y="386" width="1" height="14" fill="#ffff00"/><rect x="440" y="387" width="1" height="13" fill="#ffff00"/></svg>
<div class="t" style="left:9px;top:21px;">25<span class="z">0</span>925<span class="z">0</span>35<span class="z">0</span>.png</div>
<div class="t" style="left:125px;top:27px;"> eteor</div>
<div class="t" style="left:9px;top:41px;">25.<span class="z">0</span>9.25 <span class="z">0</span>3:5<span class="z">0</span></div>
<div class="t" style="left:139px;top:41px;">16</div>
<div class="t" style="left:180px;top:6px;">Observer           : Takanori Kawachi
Receiving Location : Ogaki, Gifu, JAPAN (136.6<span class="z">0</span>E, 35.35N)
Receiver           : R82<span class="z">0</span>T2(RTL-SDR) SDR-Sharp 53.1<span class="z">0</span><span class="z">0</span><span class="z">0</span>MHz
Receiving antenna  : 2el-HB9CV Vertical (el. E-W)</div>
<div class="t" style="left:-1px;top:76px;">k</div>
<div class="t" style="left:6px;top:76px;">H</div>
<div class="t" style="left:13px;top:76px;">z</div>
<div class="t" style="left:57px;top:81px;"><span class="z">0</span>351</div>
<div class="t" style="left:117px;top:81px;"><span class="z">0</span>352</div>
<div class="t" style="left:177px;top:81px;"><span class="z">0</span>353</div>
<div class="t" style="left:237px;top:81px;"><span class="z">0</span>354</div>
<div class="t" style="left:297px;top:81px;"><span class="z">0</span>355</div>
<div class="t" style="left:357px;top:81px;"><span class="z">0</span>356</div>
<div class="t" style="left:417px;top:81px;"><span class="z">0</span>357</div>
<div class="t" style="left:477px;top:81px;"><span class="z">0</span>358</div>
<div class="t" style="left:537px;top:81px;"><span class="z">0</span>359</div>
<div class="t" style="left:597px;top:81px;"><span class="z">0</span>4<span class="z">0</span><span class="z">0</span></div>
<div class="t" style="left:0px;top:125px;">1</div>
<div class="t" style="left:5px;top:125px;">.</div>
<div class="t" style="left:8px;top:125px;">1</div>
<div class="t" style="left:0px;top:175px;">1</div>
<div class="t" style="left:5px;top:175px;">.</div>
<div class="t" style="left:8px;top:175px;"><span class="z">0</span></div>
<div class="t" style="left:0px;top:225px;"><span class="z">0</span></div>
<div class="t" style="left:5px;top:225px;">.</div>
<div class="t" style="left:8px;top:225px;">9</div>
<div class="t" style="left:0px;top:275px;"><span class="z">0</span></div>
<div class="t" style="left:5px;top:275px;">.</div>
<div class="t" style="left:8px;top:275px;">8</div>
<div class="t" style="left:0px;top:325px;"><span class="z">0</span></div>
<div class="t" style="left:5px;top:325px;">.</div>
<div class="t" style="left:8px;top:325px;">7</div>
<div class="t" style="left:0px;top:375px;"><span class="z">0</span></div>
<div class="t" style="left:5px;top:375px;">.</div>
<div class="t" style="left:8px;top:375px;">6</div>
<script>
(function(){
var cv=document.getElementById('cv');var c=cv.getContext('2d');
var W=600,H=320;var img=c.createImageData(W,H);var d=img.data;
var s=123456789;function r(){s^=s<<13;s^=s>>>17;s^=s<<5;return ((s>>>0)%100000)/100000;}
for(var y=0;y<H;y++)for(var x=0;x<W;x++){var i=(y*W+x)*4;var v=-Math.log(1-r()+1e-9);var b=0;
 if(v>1.85){b=Math.min(255,62+(v-1.85)*38);} d[i]=0;d[i+1]=0;d[i+2]=b;d[i+3]=255;}
c.putImageData(img,0,0);
})();
</script>
</body></html>
